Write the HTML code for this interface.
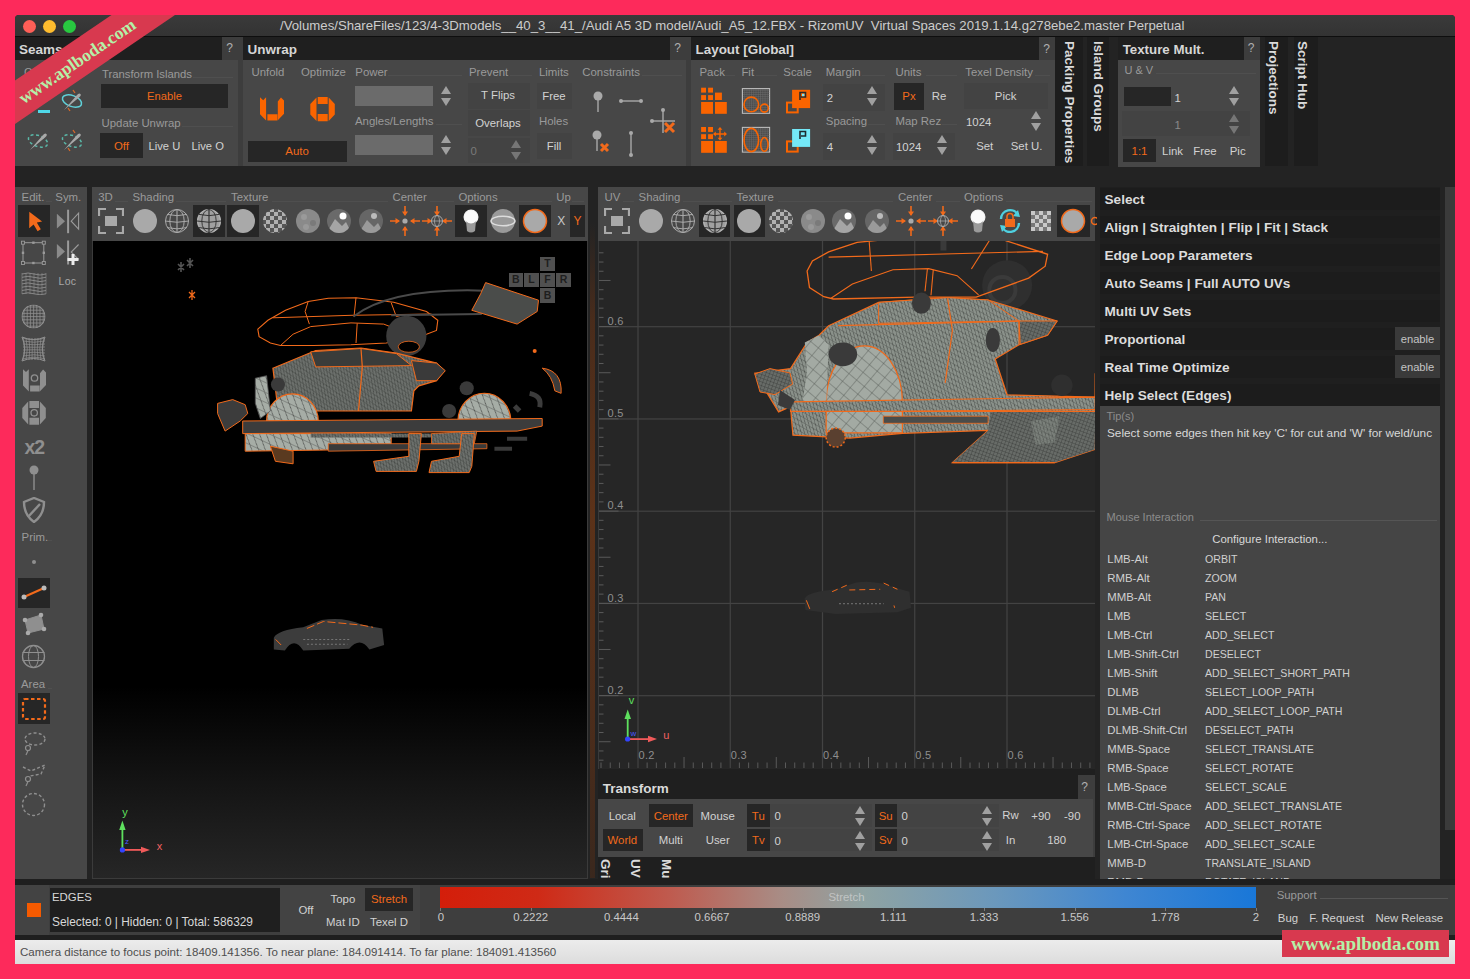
<!DOCTYPE html><html><head><meta charset="utf-8"><style>
*{margin:0;padding:0;box-sizing:border-box}
html,body{width:1470px;height:979px;overflow:hidden;background:#fd2a5b;font-family:"Liberation Sans",sans-serif}
.a{position:absolute;display:block}
#win{position:absolute;left:15px;top:15px;width:1440px;height:949px;background:#232323;overflow:hidden;border-radius:4px 4px 0 0}
#c{position:absolute;left:-15px;top:-15px;width:1470px;height:979px}
.tx{position:absolute;white-space:nowrap}
</style></head><body><div id="win"><div id="c">
<div class="a" style="left:15px;top:15px;width:1440px;height:21px;background:linear-gradient(#3a3a3a,#333);"></div>
<div class="a" style="left:15px;top:36px;width:1440px;height:1px;background:#0e0e0e;"></div>
<div class="a" style="left:22.5px;top:19.5px;width:13px;height:13px;border-radius:7px;background:#fe5f57"></div>
<div class="a" style="left:42.5px;top:19.5px;width:13px;height:13px;border-radius:7px;background:#febc2e"></div>
<div class="a" style="left:62.5px;top:19.5px;width:13px;height:13px;border-radius:7px;background:#28c840"></div>
<div class="tx" style="left:280px;top:17.42px;font-size:13.2px;line-height:17.16px;color:#cdcdcd;">/Volumes/ShareFiles/123/4-3Dmodels__40_3__41_/Audi A5 3D model/Audi_A5_12.FBX - RizomUV&nbsp; Virtual Spaces 2019.1.14.g278ebe2.master Perpetual</div>
<div class="a" style="left:15px;top:37px;width:223px;height:129px;background:#3d3d3d;"></div>
<div class="a" style="left:15px;top:37px;width:207px;height:23px;background:#1f1f1f;"></div>
<div class="tx" style="left:19px;top:41.02px;font-size:13.5px;line-height:17.55px;color:#d6d6d6;font-weight:bold;">Seams</div>
<div class="tx" style="left:79.5px;width:300px;text-align:center;top:41.2px;font-size:12px;line-height:15.6px;color:#b0b0b0;">?</div>
<div class="a" style="left:15px;top:60px;width:223px;height:106px;background:#474747;"></div>
<div class="tx" style="left:24px;top:64.59px;font-size:11.4px;line-height:14.82px;color:#9a9a9a;">C</div>
<div class="tx" style="left:102px;top:66.66px;font-size:11.3px;line-height:14.69px;color:#9a9a9a;">Transform Islands</div>
<div class="a" style="left:193px;top:77px;width:40px;height:1px;background:#4f4f4f;"></div>
<div class="a" style="left:101px;top:84px;width:127px;height:24px;background:#262626;"></div>
<div class="tx" style="left:14.5px;width:300px;text-align:center;top:88.72px;font-size:11.2px;line-height:14.56px;color:#f26a1b;">Enable</div>
<div class="tx" style="left:101.5px;top:115.59px;font-size:11.4px;line-height:14.82px;color:#9a9a9a;">Update Unwrap</div>
<div class="a" style="left:182px;top:126px;width:51px;height:1px;background:#4f4f4f;"></div>
<div class="a" style="left:100px;top:133px;width:43px;height:25px;background:#262626;"></div>
<div class="tx" style="left:-28.5px;width:300px;text-align:center;top:138.59px;font-size:11.4px;line-height:14.82px;color:#f26a1b;">Off</div>
<div class="tx" style="left:148.5px;top:138.72px;font-size:11.2px;line-height:14.56px;color:#d2d2d2;">Live U</div>
<div class="tx" style="left:191.5px;top:138.72px;font-size:11.2px;line-height:14.56px;color:#d2d2d2;">Live O</div>
<svg class="a" style="left:60.400000000000006px;top:89px;" width="24" height="24" viewBox="0 0 24 24"><ellipse cx="12" cy="12" rx="10" ry="5.5" transform="rotate(20 12 12)" fill="none" stroke="#5fd0d8" stroke-width="1.5" /><path d="M4 21 L17 6 Q19 3.5 20.5 5 Q21.5 6.5 19 8.5 Z" fill="#a8a8a8"/><path d="M13 1 L15 4 M8 19 L10 22" stroke="#d86a2a" stroke-width="1.3"/></svg>
<div class="a" style="left:38px;top:110px;width:12px;height:3px;background:#4fd8e8;"></div>
<svg class="a" style="left:25.700000000000003px;top:128.6px;" width="24" height="24" viewBox="0 0 24 24"><ellipse cx="12" cy="12" rx="10" ry="5.5" transform="rotate(20 12 12)" fill="none" stroke="#5ab8a8" stroke-width="1.5" stroke-dasharray="3 2.5"/><path d="M4 21 L17 6 Q19 3.5 20.5 5 Q21.5 6.5 19 8.5 Z" fill="#a8a8a8"/></svg>
<svg class="a" style="left:60.400000000000006px;top:128.6px;" width="24" height="24" viewBox="0 0 24 24"><ellipse cx="12" cy="12" rx="10" ry="5.5" transform="rotate(20 12 12)" fill="none" stroke="#5ab8a8" stroke-width="1.5" stroke-dasharray="3 2.5"/><path d="M4 21 L17 6 Q19 3.5 20.5 5 Q21.5 6.5 19 8.5 Z" fill="#a8a8a8"/><path d="M13 1 L15 4 M8 19 L10 22" stroke="#d86a2a" stroke-width="1.3"/></svg>
<div class="a" style="left:238px;top:37px;width:448px;height:129px;background:#3d3d3d;"></div>
<div class="a" style="left:243px;top:37px;width:427px;height:23px;background:#1f1f1f;"></div>
<div class="tx" style="left:247.5px;top:41.02px;font-size:13.5px;line-height:17.55px;color:#d6d6d6;font-weight:bold;">Unwrap</div>
<div class="tx" style="left:527.5px;width:300px;text-align:center;top:41.2px;font-size:12px;line-height:15.6px;color:#b0b0b0;">?</div>
<div class="a" style="left:243px;top:60px;width:443px;height:106px;background:#474747;"></div>
<div class="tx" style="left:251.5px;top:64.59px;font-size:11.4px;line-height:14.82px;color:#9a9a9a;">Unfold</div>
<div class="tx" style="left:301px;top:64.59px;font-size:11.4px;line-height:14.82px;color:#9a9a9a;">Optimize</div>
<div class="tx" style="left:355.3px;top:64.59px;font-size:11.4px;line-height:14.82px;color:#9a9a9a;">Power</div>
<div class="a" style="left:388px;top:75px;width:74px;height:1px;background:#4f4f4f;"></div>
<div class="tx" style="left:469px;top:64.59px;font-size:11.4px;line-height:14.82px;color:#9a9a9a;">Prevent</div>
<div class="a" style="left:510px;top:75px;width:22px;height:1px;background:#4f4f4f;"></div>
<div class="tx" style="left:539px;top:64.59px;font-size:11.4px;line-height:14.82px;color:#9a9a9a;">Limits</div>
<div class="tx" style="left:582.3px;top:64.59px;font-size:11.4px;line-height:14.82px;color:#9a9a9a;">Constraints</div>
<div class="a" style="left:642px;top:75px;width:40px;height:1px;background:#4f4f4f;"></div>
<svg class="a" style="left:259.7px;top:97.3px;" width="25" height="25" viewBox="0 0 25 25"><path d="M0 0.3 L3.2 3.2 L6.1 0.3 L6.1 23.6 L0 17.2 Z M7.4 17.2 H17.4 V23.4 H7.4 Z M17.8 4.5 L21 0.6 L24 3.6 L24 16.8 L17.8 23.3 Z" fill="#fa6400"/></svg>
<svg class="a" style="left:309.5px;top:96.6px;" width="25" height="25" viewBox="0 0 25 25"><path d="M6.5 0.6 V23.9 L0.3 17.5 V7.1 Z M7.7 0 H17.7 V7.1 H7.7 Z M7.7 17.1 H17.7 V24.2 H7.7 Z M18.7 0.6 L24.8 7.1 V17.5 L18.7 23.9 Z" fill="#fa6400"/></svg>
<div class="a" style="left:247.5px;top:140.5px;width:99.5px;height:21.5px;background:#262626;"></div>
<div class="tx" style="left:147px;width:300px;text-align:center;top:144.09px;font-size:11.4px;line-height:14.82px;color:#f26a1b;">Auto</div>
<div class="a" style="left:355px;top:86px;width:78px;height:20px;background:#6b6b6b;"></div>
<svg class="a" style="left:440px;top:85px;" width="12" height="22" viewBox="0 0 12 22"><path d="M6 1 L11 9 L1 9 Z M1 13 L11 13 L6 21 Z" fill="#a0a0a0" opacity="1"/></svg>
<div class="tx" style="left:355px;top:113.59px;font-size:11.4px;line-height:14.82px;color:#9a9a9a;">Angles/Lengths</div>
<div class="a" style="left:436px;top:124px;width:26px;height:1px;background:#4f4f4f;"></div>
<div class="a" style="left:355px;top:135px;width:78px;height:20px;background:#6b6b6b;"></div>
<svg class="a" style="left:440px;top:134px;" width="12" height="22" viewBox="0 0 12 22"><path d="M6 1 L11 9 L1 9 Z M1 13 L11 13 L6 21 Z" fill="#a0a0a0" opacity="1"/></svg>
<div class="a" style="left:468px;top:83px;width:62px;height:26px;background:#434343;"></div>
<div class="tx" style="left:348px;width:300px;text-align:center;top:88.09px;font-size:11.4px;line-height:14.82px;color:#d2d2d2;">T Flips</div>
<div class="a" style="left:468px;top:110px;width:62px;height:26px;background:#434343;"></div>
<div class="tx" style="left:348px;width:300px;text-align:center;top:115.59px;font-size:11.4px;line-height:14.82px;color:#d2d2d2;">Overlaps</div>
<div class="a" style="left:468px;top:138px;width:62px;height:25px;background:#434343;"></div>
<div class="tx" style="left:470.5px;top:143.59px;font-size:11.4px;line-height:14.82px;color:#7a7a7a;">0</div>
<svg class="a" style="left:510px;top:139px;" width="12" height="22" viewBox="0 0 12 22"><path d="M6 1 L11 9 L1 9 Z M1 13 L11 13 L6 21 Z" fill="#9a9a9a" opacity="0.6"/></svg>
<div class="a" style="left:537px;top:83px;width:35px;height:26px;background:#434343;"></div>
<div class="tx" style="left:404px;width:300px;text-align:center;top:88.59px;font-size:11.4px;line-height:14.82px;color:#d2d2d2;">Free</div>
<div class="tx" style="left:539px;top:113.59px;font-size:11.4px;line-height:14.82px;color:#9a9a9a;">Holes</div>
<div class="a" style="left:537px;top:133px;width:35px;height:26px;background:#434343;"></div>
<div class="tx" style="left:404px;width:300px;text-align:center;top:138.59px;font-size:11.4px;line-height:14.82px;color:#d2d2d2;">Fill</div>
<svg class="a" style="left:591.6px;top:91px;" width="12" height="22" viewBox="0 0 12 22"><circle cx="6" cy="5" r="4.5" fill="#a9a9a9"/><rect x="5.3" y="8" width="1.4" height="13" fill="#a9a9a9"/></svg>
<svg class="a" style="left:591px;top:130px;" width="20" height="24" viewBox="0 0 20 24"><circle cx="6" cy="5" r="4.5" fill="#a9a9a9"/><rect x="5.3" y="8" width="1.4" height="13" fill="#a9a9a9"/><path d="M10 14 L17 21 M17 14 L10 21" stroke="#f26a1b" stroke-width="3"/></svg>
<svg class="a" style="left:619px;top:96px;" width="24" height="10" viewBox="0 0 24 10"><circle cx="2" cy="5" r="2" fill="#a9a9a9"/><circle cx="22" cy="5" r="2" fill="#a9a9a9"/><rect x="2" y="4.3" width="20" height="1.4" fill="#a9a9a9"/></svg>
<svg class="a" style="left:625.5px;top:131px;" width="10" height="26" viewBox="0 0 10 26"><circle cx="5" cy="2" r="2" fill="#a9a9a9"/><circle cx="5" cy="24" r="2" fill="#a9a9a9"/><rect x="4.3" y="2" width="1.4" height="22" fill="#a9a9a9"/></svg>
<svg class="a" style="left:650px;top:108px;" width="28" height="28" viewBox="0 0 28 28"><rect x="12.3" y="1" width="1.4" height="24" fill="#a9a9a9"/><rect x="1" y="12.3" width="24" height="1.4" fill="#a9a9a9"/><circle cx="13" cy="2" r="2" fill="#a9a9a9"/><circle cx="2" cy="13" r="2" fill="#a9a9a9"/><path d="M15 15 L24 24 M24 15 L15 24" stroke="#f26a1b" stroke-width="3"/></svg>
<div class="a" style="left:686px;top:37px;width:369px;height:129px;background:#3d3d3d;"></div>
<div class="a" style="left:691px;top:37px;width:348px;height:23px;background:#1f1f1f;"></div>
<div class="tx" style="left:695.5px;top:41.06px;font-size:13.45px;line-height:17.48px;color:#d6d6d6;font-weight:bold;">Layout [Global]</div>
<div class="tx" style="left:896.7px;width:300px;text-align:center;top:41.7px;font-size:12px;line-height:15.6px;color:#b0b0b0;">?</div>
<div class="a" style="left:691px;top:60px;width:364px;height:106px;background:#474747;"></div>
<div class="tx" style="left:699.5px;top:64.59px;font-size:11.4px;line-height:14.82px;color:#9a9a9a;">Pack</div>
<div class="a" style="left:725px;top:75px;width:10px;height:1px;background:#4f4f4f;"></div>
<div class="tx" style="left:741.4px;top:64.59px;font-size:11.4px;line-height:14.82px;color:#9a9a9a;">Fit</div>
<div class="a" style="left:756px;top:75px;width:21px;height:1px;background:#4f4f4f;"></div>
<div class="tx" style="left:783.3px;top:64.59px;font-size:11.4px;line-height:14.82px;color:#9a9a9a;">Scale</div>
<div class="tx" style="left:825.8px;top:64.59px;font-size:11.4px;line-height:14.82px;color:#9a9a9a;">Margin</div>
<div class="a" style="left:862px;top:75px;width:23px;height:1px;background:#4f4f4f;"></div>
<div class="tx" style="left:895.5px;top:64.59px;font-size:11.4px;line-height:14.82px;color:#9a9a9a;">Units</div>
<div class="a" style="left:926px;top:75px;width:31px;height:1px;background:#4f4f4f;"></div>
<div class="tx" style="left:965.2px;top:64.59px;font-size:11.4px;line-height:14.82px;color:#9a9a9a;">Texel Density</div>
<div class="a" style="left:1035px;top:75px;width:15px;height:1px;background:#4f4f4f;"></div>
<svg class="a" style="left:695px;top:82px" width="120" height="76" viewBox="695 82 120 76"><rect x="701.1" y="87.7" width="4.9" height="4.9" fill="#fa6400"/><rect x="708.1" y="87.7" width="4.9" height="4.9" fill="#fa6400"/><rect x="701.1" y="95.1" width="4.9" height="4.9" fill="#fa6400"/><rect x="708.1" y="95.1" width="4.9" height="4.9" fill="#fa6400"/><rect x="715" y="92.6" width="6.9" height="7.4" fill="#fa6400"/><rect x="701.1" y="102" width="11.9" height="11.8" fill="#fa6400"/><rect x="715" y="102" width="11.8" height="11.8" fill="#fa6400"/><rect x="701.1" y="127" width="4.9" height="4.9" fill="#fa6400"/><rect x="708.1" y="127" width="4.9" height="4.9" fill="#fa6400"/><rect x="701.1" y="134.2" width="4.9" height="4.9" fill="#fa6400"/><rect x="708.1" y="134.2" width="4.9" height="4.9" fill="#fa6400"/><rect x="701.1" y="141" width="11.9" height="11.8" fill="#fa6400"/><rect x="715" y="141" width="11.8" height="11.8" fill="#fa6400"/><path d="M720 128.5 V139 M714.5 134 H725.5" stroke="#fa6400" stroke-width="1.4"/><path d="M720 127 L717.6 129.8 H722.4Z M720 140.5 L717.6 137.7 H722.4Z M713 134 L715.8 131.6 V136.4Z M727 134 L724.2 131.6 V136.4Z" fill="#fa6400"/><rect x="742.4" y="88.6" width="27.2" height="24.7" fill="#4a4a4a" stroke="#bdbdbd" stroke-width="1.1"/><path d="M744.67 89.1 V112.8 M743 90.24 H769.5" stroke="#6e6e6e" stroke-width="0.5"/><path d="M746.93 89.1 V112.8 M743 92.38 H769.5" stroke="#6e6e6e" stroke-width="0.5"/><path d="M749.20 89.1 V112.8 M743 94.52 H769.5" stroke="#6e6e6e" stroke-width="0.5"/><path d="M751.47 89.1 V112.8 M743 96.67 H769.5" stroke="#6e6e6e" stroke-width="0.5"/><path d="M753.73 89.1 V112.8 M743 98.81 H769.5" stroke="#6e6e6e" stroke-width="0.5"/><path d="M756.00 89.1 V112.8 M743 100.95 H769.5" stroke="#6e6e6e" stroke-width="0.5"/><path d="M758.27 89.1 V112.8 M743 103.09 H769.5" stroke="#6e6e6e" stroke-width="0.5"/><path d="M760.53 89.1 V112.8 M743 105.23 H769.5" stroke="#6e6e6e" stroke-width="0.5"/><path d="M762.80 89.1 V112.8 M743 107.38 H769.5" stroke="#6e6e6e" stroke-width="0.5"/><path d="M765.07 89.1 V112.8 M743 109.52 H769.5" stroke="#6e6e6e" stroke-width="0.5"/><path d="M767.33 89.1 V112.8 M743 111.66 H769.5" stroke="#6e6e6e" stroke-width="0.5"/><rect x="742.4" y="127.4" width="27.2" height="24.7" fill="#4a4a4a" stroke="#bdbdbd" stroke-width="1.1"/><path d="M744.67 127.9 V151.6 M743 129.04 H769.5" stroke="#6e6e6e" stroke-width="0.5"/><path d="M746.93 127.9 V151.6 M743 131.18 H769.5" stroke="#6e6e6e" stroke-width="0.5"/><path d="M749.20 127.9 V151.6 M743 133.32 H769.5" stroke="#6e6e6e" stroke-width="0.5"/><path d="M751.47 127.9 V151.6 M743 135.47 H769.5" stroke="#6e6e6e" stroke-width="0.5"/><path d="M753.73 127.9 V151.6 M743 137.61 H769.5" stroke="#6e6e6e" stroke-width="0.5"/><path d="M756.00 127.9 V151.6 M743 139.75 H769.5" stroke="#6e6e6e" stroke-width="0.5"/><path d="M758.27 127.9 V151.6 M743 141.89 H769.5" stroke="#6e6e6e" stroke-width="0.5"/><path d="M760.53 127.9 V151.6 M743 144.03 H769.5" stroke="#6e6e6e" stroke-width="0.5"/><path d="M762.80 127.9 V151.6 M743 146.18 H769.5" stroke="#6e6e6e" stroke-width="0.5"/><path d="M765.07 127.9 V151.6 M743 148.32 H769.5" stroke="#6e6e6e" stroke-width="0.5"/><path d="M767.33 127.9 V151.6 M743 150.46 H769.5" stroke="#6e6e6e" stroke-width="0.5"/><circle cx="751.3" cy="104.4" r="7.3" fill="none" stroke="#fa6400" stroke-width="1.6"/><circle cx="764.4" cy="108.1" r="4" fill="none" stroke="#fa6400" stroke-width="1.6"/><ellipse cx="751.3" cy="140" rx="7.3" ry="11.6" fill="none" stroke="#fa6400" stroke-width="1.6"/><ellipse cx="764.4" cy="144.4" rx="3.7" ry="6.9" fill="none" stroke="#fa6400" stroke-width="1.6"/><rect x="787" y="102.6" width="10.7" height="9.8" fill="none" stroke="#fa6400" stroke-width="2"/><rect x="792.1" y="89.8" width="18.0" height="18.3" fill="#fa6400"/><path d="M800 100 V92.5 H805.5 V97 H801" fill="none" stroke="#2a2a2a" stroke-width="1.6"/><rect x="802" y="93.8" width="2.4" height="2.4" fill="#7fe6f5"/><rect x="787" y="141.4" width="10.7" height="10.2" fill="none" stroke="#fa6400" stroke-width="2"/><rect x="792.1" y="129" width="18.0" height="17.9" fill="#74e8f7"/><path d="M800 139 V131.5 H805.5 V136 H801" fill="none" stroke="#1e2a2e" stroke-width="1.6"/></svg>
<div class="a" style="left:823px;top:84px;width:62px;height:27px;background:#434343;"></div>
<div class="tx" style="left:826.7px;top:91.09px;font-size:11.4px;line-height:14.82px;color:#d2d2d2;">2</div>
<svg class="a" style="left:865.6px;top:85px;" width="12" height="22" viewBox="0 0 12 22"><path d="M6 1 L11 9 L1 9 Z M1 13 L11 13 L6 21 Z" fill="#a0a0a0" opacity="1"/></svg>
<div class="tx" style="left:825.8px;top:113.89px;font-size:11.4px;line-height:14.82px;color:#9a9a9a;">Spacing</div>
<div class="a" style="left:868px;top:124px;width:17px;height:1px;background:#4f4f4f;"></div>
<div class="a" style="left:823px;top:133px;width:62px;height:27px;background:#434343;"></div>
<div class="tx" style="left:826.7px;top:139.59px;font-size:11.4px;line-height:14.82px;color:#d2d2d2;">4</div>
<svg class="a" style="left:865.6px;top:134px;" width="12" height="22" viewBox="0 0 12 22"><path d="M6 1 L11 9 L1 9 Z M1 13 L11 13 L6 21 Z" fill="#a0a0a0" opacity="1"/></svg>
<div class="a" style="left:894px;top:82.5px;width:30px;height:27.5px;background:#262626;"></div>
<div class="tx" style="left:759px;width:300px;text-align:center;top:88.59px;font-size:11.4px;line-height:14.82px;color:#f26a1b;">Px</div>
<div class="tx" style="left:789px;width:300px;text-align:center;top:88.59px;font-size:11.4px;line-height:14.82px;color:#d2d2d2;">Re</div>
<div class="tx" style="left:895.5px;top:113.89px;font-size:11.4px;line-height:14.82px;color:#9a9a9a;">Map Rez</div>
<div class="a" style="left:942px;top:124px;width:15px;height:1px;background:#4f4f4f;"></div>
<div class="a" style="left:893px;top:133px;width:62px;height:27px;background:#434343;"></div>
<div class="tx" style="left:896px;top:139.59px;font-size:11.4px;line-height:14.82px;color:#d2d2d2;">1024</div>
<svg class="a" style="left:936px;top:134px;" width="12" height="22" viewBox="0 0 12 22"><path d="M6 1 L11 9 L1 9 Z M1 13 L11 13 L6 21 Z" fill="#a0a0a0" opacity="1"/></svg>
<div class="a" style="left:964px;top:83px;width:84px;height:26px;background:#434343;"></div>
<div class="tx" style="left:855.6px;width:300px;text-align:center;top:88.59px;font-size:11.4px;line-height:14.82px;color:#d2d2d2;">Pick</div>
<div class="tx" style="left:966px;top:115.09px;font-size:11.4px;line-height:14.82px;color:#d2d2d2;">1024</div>
<svg class="a" style="left:1029.6px;top:110px;" width="12" height="22" viewBox="0 0 12 22"><path d="M6 1 L11 9 L1 9 Z M1 13 L11 13 L6 21 Z" fill="#a0a0a0" opacity="1"/></svg>
<div class="tx" style="left:834.7px;width:300px;text-align:center;top:138.59px;font-size:11.4px;line-height:14.82px;color:#d2d2d2;">Set</div>
<div class="tx" style="left:876.5999999999999px;width:300px;text-align:center;top:138.59px;font-size:11.4px;line-height:14.82px;color:#d2d2d2;">Set U.</div>
<div class="a" style="left:1055px;top:37px;width:28px;height:129px;background:#1d1d1d;"></div>
<div class="a" style="left:1087px;top:37px;width:22px;height:129px;background:#1d1d1d;"></div>
<div class="tx" style="left:1069px;top:41px;transform-origin:0 0;transform:rotate(90deg) translate(0,-8px);font-size:13.5px;line-height:16px;color:#dadada;font-weight:bold">Packing Properties</div>
<div class="tx" style="left:1098px;top:41px;transform-origin:0 0;transform:rotate(90deg) translate(0,-8px);font-size:13.5px;line-height:16px;color:#dadada;font-weight:bold">Island Groups</div>
<div class="a" style="left:1118px;top:37px;width:142px;height:130px;background:#3d3d3d;"></div>
<div class="a" style="left:1118px;top:37px;width:125.5px;height:23px;background:#1f1f1f;"></div>
<div class="tx" style="left:1122.7px;top:41.16px;font-size:13.3px;line-height:17.29px;color:#d6d6d6;font-weight:bold;">Texture Mult.</div>
<div class="tx" style="left:1101px;width:300px;text-align:center;top:41.2px;font-size:12px;line-height:15.6px;color:#b0b0b0;">?</div>
<div class="a" style="left:1118px;top:60px;width:142px;height:107px;background:#474747;"></div>
<div class="tx" style="left:1124.4px;top:63.35px;font-size:11px;line-height:14.3px;color:#9a9a9a;">U &amp; V</div>
<div class="a" style="left:1156px;top:73px;width:100px;height:1px;background:#4f4f4f;"></div>
<div class="a" style="left:1124px;top:87px;width:47px;height:18.7px;background:#262626;"></div>
<div class="tx" style="left:1174.5px;top:90.59px;font-size:11.4px;line-height:14.82px;color:#d2d2d2;">1</div>
<svg class="a" style="left:1228px;top:85px;" width="12" height="22" viewBox="0 0 12 22"><path d="M6 1 L11 9 L1 9 Z M1 13 L11 13 L6 21 Z" fill="#a0a0a0" opacity="1"/></svg>
<div class="a" style="left:1122px;top:111px;width:128px;height:25px;background:#434343;"></div>
<div class="tx" style="left:1174.5px;top:117.59px;font-size:11.4px;line-height:14.82px;color:#8a8a8a;">1</div>
<svg class="a" style="left:1228px;top:113px;" width="12" height="22" viewBox="0 0 12 22"><path d="M6 1 L11 9 L1 9 Z M1 13 L11 13 L6 21 Z" fill="#9a9a9a" opacity="0.6"/></svg>
<div class="a" style="left:1123px;top:139px;width:33px;height:23px;background:#262626;"></div>
<div class="tx" style="left:989.5px;width:300px;text-align:center;top:143.59px;font-size:11.4px;line-height:14.82px;color:#f26a1b;">1:1</div>
<div class="tx" style="left:1022.5px;width:300px;text-align:center;top:143.59px;font-size:11.4px;line-height:14.82px;color:#d2d2d2;">Link</div>
<div class="tx" style="left:1055px;width:300px;text-align:center;top:143.59px;font-size:11.4px;line-height:14.82px;color:#d2d2d2;">Free</div>
<div class="tx" style="left:1087.7px;width:300px;text-align:center;top:143.59px;font-size:11.4px;line-height:14.82px;color:#d2d2d2;">Pic</div>
<div class="a" style="left:1265px;top:37px;width:23px;height:129px;background:#1d1d1d;"></div>
<div class="a" style="left:1294px;top:37px;width:24px;height:129px;background:#1d1d1d;"></div>
<div class="tx" style="left:1272.5px;top:41px;transform-origin:0 0;transform:rotate(90deg) translate(0,-8px);font-size:13.5px;line-height:16px;color:#dadada;font-weight:bold">Projections</div>
<div class="tx" style="left:1301.5px;top:41px;transform-origin:0 0;transform:rotate(90deg) translate(0,-8px);font-size:13.5px;line-height:16px;color:#dadada;font-weight:bold">Script Hub</div>
<div class="a" style="left:15px;top:187px;width:72px;height:692px;background:#474747;"></div>
<div class="tx" style="left:21.6px;top:190.09px;font-size:11.4px;line-height:14.82px;color:#9a9a9a;">Edit.</div>
<div class="a" style="left:46px;top:201px;width:6px;height:1px;background:#4f4f4f;"></div>
<div class="tx" style="left:55.3px;top:190.09px;font-size:11.4px;line-height:14.82px;color:#9a9a9a;">Sym.</div>
<div class="a" style="left:18px;top:205px;width:32px;height:32px;background:#262626;"></div>
<svg class="a" style="left:15px;top:205px" width="75" height="65" viewBox="15 205 75 65"><path d="M29.3 211.7 L42.1 221.5 L36.8 222.6 L40.8 229.3 L37.6 231.2 L33.6 224.6 L29.2 228.2 Z" fill="#f26a1b"/><path d="M56.9 213.8 L65 221.2 L56.9 228.6 Z" fill="#8a8a8a"/><rect x="67.1" y="209.7" width="2" height="23.5" fill="#9a9a9a"/><path d="M78.6 213.2 L71.2 221.2 L78.6 229.2 Z" fill="none" stroke="#9a9a9a" stroke-width="1.1"/><rect x="23" y="242.7" width="20.8" height="20.3" fill="none" stroke="#9a9a9a" stroke-width="1"/><rect x="21.5" y="241.2" width="3" height="3" fill="#474747" stroke="#9a9a9a" stroke-width="0.9"/><rect x="42.3" y="241.2" width="3" height="3" fill="#474747" stroke="#9a9a9a" stroke-width="0.9"/><rect x="21.5" y="261.5" width="3" height="3" fill="#474747" stroke="#9a9a9a" stroke-width="0.9"/><rect x="42.3" y="261.5" width="3" height="3" fill="#474747" stroke="#9a9a9a" stroke-width="0.9"/><rect x="32.199999999999996" y="241.5" width="2.4" height="2.4" fill="#9a9a9a"/><rect x="32.199999999999996" y="261.8" width="2.4" height="2.4" fill="#9a9a9a"/><rect x="21.8" y="251.60000000000002" width="2.4" height="2.4" fill="#9a9a9a"/><rect x="42.599999999999994" y="251.60000000000002" width="2.4" height="2.4" fill="#9a9a9a"/><path d="M56.9 244 L65 251.4 L56.9 258.8 Z" fill="#8a8a8a"/><rect x="67.1" y="240.5" width="2" height="24" fill="#9a9a9a"/><path d="M78.6 244.5 L71.2 252 L78.6 259.5" fill="none" stroke="#9a9a9a" stroke-width="1.1"/><path d="M73 254 V265 M67.5 259.5 H78.5" stroke="#ececec" stroke-width="3"/></svg>
<svg class="a" style="left:21px;top:271px;" width="26" height="24" viewBox="0 0 26 24"><path d="M1 3.0 Q7 1.0 13 3.0 T25 3.0" fill="none" stroke="#8f8f8f" stroke-width="0.9"/><path d="M1 6.3 Q7 4.3 13 6.3 T25 6.3" fill="none" stroke="#8f8f8f" stroke-width="0.9"/><path d="M1 9.6 Q7 7.6 13 9.6 T25 9.6" fill="none" stroke="#8f8f8f" stroke-width="0.9"/><path d="M1 12.899999999999999 Q7 10.899999999999999 13 12.899999999999999 T25 12.899999999999999" fill="none" stroke="#8f8f8f" stroke-width="0.9"/><path d="M1 16.2 Q7 14.2 13 16.2 T25 16.2" fill="none" stroke="#8f8f8f" stroke-width="0.9"/><path d="M1 19.5 Q7 17.5 13 19.5 T25 19.5" fill="none" stroke="#8f8f8f" stroke-width="0.9"/><path d="M1 22.799999999999997 Q7 20.799999999999997 13 22.799999999999997 T25 22.799999999999997" fill="none" stroke="#8f8f8f" stroke-width="0.9"/><path d="M1 2 V23" stroke="#8f8f8f" stroke-width="0.6"/><path d="M5 2 V23" stroke="#8f8f8f" stroke-width="0.6"/><path d="M9 2 V23" stroke="#8f8f8f" stroke-width="0.6"/><path d="M13 2 V23" stroke="#8f8f8f" stroke-width="0.6"/><path d="M17 2 V23" stroke="#8f8f8f" stroke-width="0.6"/><path d="M21 2 V23" stroke="#8f8f8f" stroke-width="0.6"/><path d="M25 2 V23" stroke="#8f8f8f" stroke-width="0.6"/></svg>
<div class="tx" style="left:-82.5px;width:300px;text-align:center;top:274.68px;font-size:10.5px;line-height:13.65px;color:#a8a8a8;letter-spacing:0.3px">Loc</div>
<svg class="a" style="left:21px;top:304px;clip-path:circle(12px at 12.5px 12.5px)" width="25" height="25" viewBox="0 0 25 25"><circle cx="12.5" cy="12.5" r="11.5" fill="none" stroke="#8f8f8f" stroke-width="1.2"/><path d="M1 3.0 H24 M3.0 1 V24" stroke="#8f8f8f" stroke-width="0.8"/><path d="M1 6.2 H24 M6.2 1 V24" stroke="#8f8f8f" stroke-width="0.8"/><path d="M1 9.4 H24 M9.4 1 V24" stroke="#8f8f8f" stroke-width="0.8"/><path d="M1 12.600000000000001 H24 M12.600000000000001 1 V24" stroke="#8f8f8f" stroke-width="0.8"/><path d="M1 15.8 H24 M15.8 1 V24" stroke="#8f8f8f" stroke-width="0.8"/><path d="M1 19.0 H24 M19.0 1 V24" stroke="#8f8f8f" stroke-width="0.8"/><path d="M1 22.200000000000003 H24 M22.200000000000003 1 V24" stroke="#8f8f8f" stroke-width="0.8"/></svg>
<svg class="a" style="left:21px;top:336px;" width="25" height="26" viewBox="0 0 25 26"><path d="M1 1 Q12.5 6 24 1 Q19 13 24 25 Q12.5 20 1 25 Q6 13 1 1 Z" fill="none" stroke="#8f8f8f" stroke-width="1"/><path d="M2 2 Q5.5 13 2 24 M2 2 Q13 5.5 24 2" fill="none" stroke="#8f8f8f" stroke-width="0.7"/><path d="M5 2 Q7.5 13 5 24 M2 5 Q13 7.5 24 5" fill="none" stroke="#8f8f8f" stroke-width="0.7"/><path d="M8 2 Q9.5 13 8 24 M2 8 Q13 9.5 24 8" fill="none" stroke="#8f8f8f" stroke-width="0.7"/><path d="M11 2 Q11.5 13 11 24 M2 11 Q13 11.5 24 11" fill="none" stroke="#8f8f8f" stroke-width="0.7"/><path d="M14 2 Q13.5 13 14 24 M2 14 Q13 13.5 24 14" fill="none" stroke="#8f8f8f" stroke-width="0.7"/><path d="M17 2 Q15.5 13 17 24 M2 17 Q13 15.5 24 17" fill="none" stroke="#8f8f8f" stroke-width="0.7"/><path d="M20 2 Q17.5 13 20 24 M2 20 Q13 17.5 24 20" fill="none" stroke="#8f8f8f" stroke-width="0.7"/><path d="M23 2 Q19.5 13 23 24 M2 23 Q13 19.5 24 23" fill="none" stroke="#8f8f8f" stroke-width="0.7"/></svg>
<svg class="a" style="left:22.5px;top:369px;" width="23" height="23" viewBox="0 0 23 23"><path d="M0 0.3 L3 3 L5.8 0.3 L5.8 22.6 L0 16.5 Z M7.1 16.5 H16.7 V22.4 H7.1 Z M17 4.3 L20.1 0.6 L23 3.4 L23 16.1 L17 22.3 Z" fill="#8f8f8f"/><circle cx="11.5" cy="9" r="3.2" fill="none" stroke="#8f8f8f" stroke-width="1.3"/></svg>
<svg class="a" style="left:22px;top:401px;" width="24" height="24" viewBox="0 0 24 24"><path d="M6.2 0.6 V23.4 L0.3 17.1 V6.9 Z M7.4 0 H17 V6.9 H7.4 Z M7.4 16.7 H17 V23.7 H7.4 Z M17.9 0.6 L23.8 6.9 V17.1 L17.9 23.4 Z" fill="#8f8f8f"/><circle cx="12.2" cy="11.8" r="3.2" fill="none" stroke="#8f8f8f" stroke-width="1.3"/></svg>
<div class="tx" style="left:-115.7px;width:300px;text-align:center;top:434.72px;font-size:19.5px;line-height:25.35px;color:#8f8f8f;font-weight:bold;letter-spacing:-1px">x2</div>
<svg class="a" style="left:28px;top:465px;" width="12" height="26" viewBox="0 0 12 26"><circle cx="6" cy="5" r="4.5" fill="#8f8f8f"/><rect x="5.3" y="8" width="1.4" height="17" fill="#8f8f8f"/></svg>
<svg class="a" style="left:22px;top:497px;" width="24" height="26" viewBox="0 0 24 26"><path d="M12 1 L22 5 Q22 18 12 25 Q2 18 2 5 Z" fill="none" stroke="#8f8f8f" stroke-width="2.4"/><path d="M6 20 L18 7" stroke="#8f8f8f" stroke-width="2.4"/></svg>
<div class="tx" style="left:21.6px;top:529.59px;font-size:11.4px;line-height:14.82px;color:#9a9a9a;">Prim.</div>
<div class="a" style="left:48px;top:540px;width:4px;height:1px;background:#4f4f4f;"></div>
<div class="a" style="left:32px;top:559.5px;width:4px;height:4px;border-radius:2px;background:#8f8f8f"></div>
<div class="a" style="left:18px;top:577.5px;width:31.5px;height:30.5px;background:#262626;"></div>
<svg class="a" style="left:21px;top:584px;" width="26" height="18" viewBox="0 0 26 18"><path d="M3 13 L23 4" stroke="#f26a1b" stroke-width="2.2"/><circle cx="3" cy="13" r="2.5" fill="#bbb"/><circle cx="23" cy="4" r="2.5" fill="#bbb"/></svg>
<svg class="a" style="left:21px;top:612px;" width="26" height="24" viewBox="0 0 26 24"><path d="M4 8 L20 3 L23 17 L7 21 Z" fill="#8f8f8f" stroke="#8f8f8f"/><circle cx="4" cy="8" r="2.3" fill="#aaa"/><circle cx="20" cy="3" r="2.3" fill="#aaa"/><circle cx="23" cy="17" r="2.3" fill="#aaa"/><circle cx="7" cy="21" r="2.3" fill="#aaa"/></svg>
<svg class="a" style="left:21px;top:644px;" width="25" height="25" viewBox="0 0 25 25"><circle cx="12.5" cy="12.5" r="11" fill="none" stroke="#8f8f8f" stroke-width="1.3"/><ellipse cx="12.5" cy="12.5" rx="5" ry="11" fill="none" stroke="#8f8f8f" stroke-width="1"/><path d="M1.5 8.5 H23.5 M1.5 16.5 H23.5" stroke="#8f8f8f" stroke-width="1"/></svg>
<div class="tx" style="left:21px;top:677.39px;font-size:11.4px;line-height:14.82px;color:#9a9a9a;">Area</div>
<div class="a" style="left:48px;top:688px;width:4px;height:1px;background:#4f4f4f;"></div>
<div class="a" style="left:18px;top:693px;width:31.5px;height:31px;background:#262626;"></div>
<svg class="a" style="left:21px;top:696px;" width="26" height="26" viewBox="0 0 26 26"><rect x="2" y="3" width="22" height="20" rx="2" fill="none" stroke="#f26a1b" stroke-width="2.2" stroke-dasharray="3.5 2.5"/></svg>
<svg class="a" style="left:21px;top:730px;" width="26" height="26" viewBox="0 0 26 26"><ellipse cx="14" cy="9" rx="10" ry="6" fill="none" stroke="#8f8f8f" stroke-width="1.4" stroke-dasharray="3 2.2"/><circle cx="7" cy="18" r="2.5" fill="none" stroke="#8f8f8f" stroke-width="1.2"/><path d="M7 20.5 L5 25" stroke="#8f8f8f" stroke-width="1.2"/></svg>
<svg class="a" style="left:21px;top:761px;" width="26" height="26" viewBox="0 0 26 26"><path d="M2 6 L10 10 L24 4 L20 13 L9 15" fill="none" stroke="#8f8f8f" stroke-width="1.4" stroke-dasharray="3 2.2"/><circle cx="7" cy="18" r="2.5" fill="none" stroke="#8f8f8f" stroke-width="1.2"/><path d="M7 20.5 L5 25" stroke="#8f8f8f" stroke-width="1.2"/></svg>
<svg class="a" style="left:21px;top:792px;" width="25" height="25" viewBox="0 0 25 25"><circle cx="12.5" cy="12.5" r="11" fill="none" stroke="#8f8f8f" stroke-width="1.4" stroke-dasharray="3 2.2"/></svg>
<div class="a" style="left:92px;top:187px;width:496px;height:692px;background:#3b3b3b;"></div>
<div class="a" style="left:92px;top:187px;width:496px;height:54px;background:#474747;"></div>
<div class="tx" style="left:98.2px;top:190.09px;font-size:11.4px;line-height:14.82px;color:#9a9a9a;">3D</div>
<div class="a" style="left:115px;top:201px;width:13px;height:1px;background:#4f4f4f;"></div>
<div class="tx" style="left:132.4px;top:190.09px;font-size:11.4px;line-height:14.82px;color:#9a9a9a;">Shading</div>
<div class="a" style="left:176px;top:201px;width:50px;height:1px;background:#4f4f4f;"></div>
<div class="tx" style="left:231px;top:190.09px;font-size:11.4px;line-height:14.82px;color:#9a9a9a;">Texture</div>
<div class="a" style="left:272px;top:201px;width:116px;height:1px;background:#4f4f4f;"></div>
<div class="tx" style="left:392.5px;top:190.09px;font-size:11.4px;line-height:14.82px;color:#9a9a9a;">Center</div>
<div class="a" style="left:430px;top:201px;width:24px;height:1px;background:#4f4f4f;"></div>
<div class="tx" style="left:458.4px;top:190.09px;font-size:11.4px;line-height:14.82px;color:#9a9a9a;">Options</div>
<div class="a" style="left:500px;top:201px;width:52px;height:1px;background:#4f4f4f;"></div>
<div class="tx" style="left:556.3px;top:190.09px;font-size:11.4px;line-height:14.82px;color:#9a9a9a;">Up</div>
<div class="a" style="left:572px;top:201px;width:12px;height:1px;background:#4f4f4f;"></div>
<div class="a" style="left:193.3px;top:205px;width:31.4px;height:31.7px;background:#262626;"></div>
<div class="a" style="left:227.3px;top:205px;width:31.7px;height:31.7px;background:#262626;"></div>
<div class="a" style="left:455px;top:205px;width:31.7px;height:31.7px;background:#262626;"></div>
<div class="a" style="left:519.3px;top:205px;width:31.7px;height:31.7px;background:#262626;"></div>
<div class="a" style="left:570.2px;top:205.3px;width:14.4px;height:31.3px;background:#262626;"></div>
<svg class="a" style="left:98px;top:207.8px;" width="26" height="26" viewBox="0 0 26 26"><path d="M1 8 V1 H8 M18 1 H25 V8 M25 18 V25 H18 M8 25 H1 V18" fill="none" stroke="#a9a9a9" stroke-width="2.2"/><rect x="7" y="8" width="12" height="10" fill="#a9a9a9"/></svg>
<svg class="a" style="left:132px;top:207.8px;" width="26" height="26" viewBox="0 0 26 26"><circle cx="13" cy="13" r="12" fill="#a9a9a9"/></svg>
<svg class="a" style="left:163.7px;top:207.8px;" width="26" height="26" viewBox="0 0 26 26"><circle cx="13" cy="13" r="11.5" fill="none" stroke="#a9a9a9" stroke-width="1"/><ellipse cx="13" cy="13" rx="7.199999999999999" ry="11.5" fill="none" stroke="#a9a9a9" stroke-width="1"/><path d="M13 1 V25" stroke="#a9a9a9" stroke-width="1.1"/><path d="M2.9780241469059607 6.3999999999999995 Q13 8.899999999999999 23.02197585309404 6.3999999999999995" fill="none" stroke="#a9a9a9" stroke-width="1"/><path d="M1.0 13.0 Q13 15.5 25.0 13.0" fill="none" stroke="#a9a9a9" stroke-width="1"/><path d="M2.9780241469059607 19.6 Q13 22.1 23.02197585309404 19.6" fill="none" stroke="#a9a9a9" stroke-width="1"/></svg>
<svg class="a" style="left:196px;top:207.8px;" width="26" height="26" viewBox="0 0 26 26"><circle cx="13" cy="13" r="12" fill="#a0a0a0"/><circle cx="13" cy="13" r="11.5" fill="none" stroke="#b8b8b8" stroke-width="1"/><ellipse cx="13" cy="13" rx="7.199999999999999" ry="11.5" fill="none" stroke="#3a3a3a" stroke-width="1"/><path d="M13 1 V25" stroke="#333" stroke-width="1.2"/><path d="M2.9780241469059607 6.3999999999999995 Q13 8.899999999999999 23.02197585309404 6.3999999999999995" fill="none" stroke="#333" stroke-width="1"/><path d="M1.0 13.0 Q13 15.5 25.0 13.0" fill="none" stroke="#333" stroke-width="1"/><path d="M2.9780241469059607 19.6 Q13 22.1 23.02197585309404 19.6" fill="none" stroke="#333" stroke-width="1"/></svg>
<svg class="a" style="left:230px;top:207.8px;" width="26" height="26" viewBox="0 0 26 26"><circle cx="13" cy="13" r="12" fill="#a9a9a9"/></svg>
<svg class="a" style="left:261.7px;top:207.8px;" width="26" height="26" viewBox="0 0 26 26"><defs><clipPath id="ck274"><circle cx="13" cy="13" r="12"/></clipPath></defs><g clip-path="url(#ck274)"><rect x="0" y="0" width="26" height="26" fill="#555"/><rect x="0" y="0" width="4" height="4" fill="#b0b0b0"/><rect x="0" y="8" width="4" height="4" fill="#b0b0b0"/><rect x="0" y="16" width="4" height="4" fill="#b0b0b0"/><rect x="0" y="24" width="4" height="4" fill="#b0b0b0"/><rect x="4" y="4" width="4" height="4" fill="#b0b0b0"/><rect x="4" y="12" width="4" height="4" fill="#b0b0b0"/><rect x="4" y="20" width="4" height="4" fill="#b0b0b0"/><rect x="8" y="0" width="4" height="4" fill="#b0b0b0"/><rect x="8" y="8" width="4" height="4" fill="#b0b0b0"/><rect x="8" y="16" width="4" height="4" fill="#b0b0b0"/><rect x="8" y="24" width="4" height="4" fill="#b0b0b0"/><rect x="12" y="4" width="4" height="4" fill="#b0b0b0"/><rect x="12" y="12" width="4" height="4" fill="#b0b0b0"/><rect x="12" y="20" width="4" height="4" fill="#b0b0b0"/><rect x="16" y="0" width="4" height="4" fill="#b0b0b0"/><rect x="16" y="8" width="4" height="4" fill="#b0b0b0"/><rect x="16" y="16" width="4" height="4" fill="#b0b0b0"/><rect x="16" y="24" width="4" height="4" fill="#b0b0b0"/><rect x="20" y="4" width="4" height="4" fill="#b0b0b0"/><rect x="20" y="12" width="4" height="4" fill="#b0b0b0"/><rect x="20" y="20" width="4" height="4" fill="#b0b0b0"/><rect x="24" y="0" width="4" height="4" fill="#b0b0b0"/><rect x="24" y="8" width="4" height="4" fill="#b0b0b0"/><rect x="24" y="16" width="4" height="4" fill="#b0b0b0"/><rect x="24" y="24" width="4" height="4" fill="#b0b0b0"/></g></svg>
<svg class="a" style="left:294.6px;top:207.8px;" width="26" height="26" viewBox="0 0 26 26"><circle cx="13" cy="13" r="12" fill="#8a8a8a"/><circle cx="9" cy="9" r="3" fill="#9a9a9a"/><circle cx="18" cy="15" r="3" fill="#7a7a7a"/><circle cx="11" cy="19" r="3" fill="#999"/></svg>
<svg class="a" style="left:325.6px;top:207.8px;" width="26" height="26" viewBox="0 0 26 26"><defs><clipPath id="mt338"><circle cx="13" cy="13" r="12"/></clipPath></defs><circle cx="13" cy="13" r="12" fill="#6a6a6a"/><g clip-path="url(#mt338)"><path d="M0 26 L9 11 L16 18 L20 14 L26 26 Z" fill="#a5a5a5"/></g><circle cx="17" cy="8" r="3.5" fill="#fff"/></svg>
<svg class="a" style="left:358.3px;top:207.8px;" width="26" height="26" viewBox="0 0 26 26"><defs><clipPath id="mu371"><circle cx="13" cy="13" r="12"/></clipPath></defs><circle cx="13" cy="13" r="12" fill="#666"/><g clip-path="url(#mu371)"><path d="M0 26 L9 12 L16 19 L20 15 L26 26 Z" fill="#9a9a9a"/></g><circle cx="16" cy="8" r="3" fill="#bbb"/></svg>
<svg class="a" style="left:389.8px;top:205.8px;" width="30" height="30" viewBox="0 0 30 30"><path d="M15 0 V9 M15 21 V30 M0 15 H9 M21 15 H30" stroke="#f26a1b" stroke-width="1.6"/><path d="M15 10 L12 5.5 L18 5.5 Z M15 20 L12 24.5 L18 24.5 Z M10 15 L5.5 12 L5.5 18 Z M20 15 L24.5 12 L24.5 18 Z" fill="#f26a1b"/><circle cx="15" cy="15" r="2.6" fill="#aaa"/></svg>
<svg class="a" style="left:421.9px;top:205.8px;" width="30" height="30" viewBox="0 0 30 30"><path d="M15 0 V9 M15 21 V30 M0 15 H9 M21 15 H30" stroke="#f26a1b" stroke-width="1.6"/><path d="M15 10 L12 5.5 L18 5.5 Z M15 20 L12 24.5 L18 24.5 Z M10 15 L5.5 12 L5.5 18 Z M20 15 L24.5 12 L24.5 18 Z" fill="#f26a1b"/><circle cx="15" cy="15" r="5.5" fill="none" stroke="#aaa" stroke-width="1"/><ellipse cx="15" cy="15" rx="2.5" ry="5.5" fill="none" stroke="#aaa" stroke-width="0.8"/><path d="M9.5 15 H20.5" stroke="#aaa" stroke-width="0.8"/></svg>
<svg class="a" style="left:461.9px;top:208.8px;" width="18" height="25" viewBox="0 0 18 25"><circle cx="9" cy="8" r="7.5" fill="#f2f2f2"/><path d="M4 12 L14 12 L13 22 Q9 25 5 22 Z" fill="#9a9a9a"/><circle cx="9" cy="8" r="6.5" fill="#fafafa"/></svg>
<svg class="a" style="left:489.7px;top:207.8px;" width="26" height="26" viewBox="0 0 26 26"><circle cx="13" cy="13" r="12" fill="#9a9a9a"/><ellipse cx="13" cy="13" rx="12" ry="4.800000000000001" fill="none" stroke="#dcdcdc" stroke-width="1.5"/></svg>
<svg class="a" style="left:521.6px;top:207.8px;" width="26" height="26" viewBox="0 0 26 26"><circle cx="13" cy="13" r="11.5" fill="#a9a9a9" stroke="#f26a1b" stroke-width="1.5"/></svg>
<div class="tx" style="left:411.20000000000005px;width:300px;text-align:center;top:213.5px;font-size:12px;line-height:15.6px;color:#c8c8c8;">X</div>
<div class="tx" style="left:427.4px;width:300px;text-align:center;top:213.5px;font-size:12px;line-height:15.6px;color:#f26a1b;">Y</div>
<div class="a" style="left:93px;top:241px;width:494px;height:637px;background:linear-gradient(#000 0%,#000 70%,#141414 85%,#262626 100%);"></div>
<div class="a" style="left:598px;top:187px;width:497px;height:693px;background:#1f1f1f;"></div>
<div class="a" style="left:598px;top:187px;width:497px;height:54px;background:#474747;"></div>
<div class="tx" style="left:604.6px;top:190.09px;font-size:11.4px;line-height:14.82px;color:#9a9a9a;">UV</div>
<div class="a" style="left:623px;top:201px;width:11px;height:1px;background:#4f4f4f;"></div>
<div class="tx" style="left:638.6px;top:190.09px;font-size:11.4px;line-height:14.82px;color:#9a9a9a;">Shading</div>
<div class="a" style="left:683px;top:201px;width:49px;height:1px;background:#4f4f4f;"></div>
<div class="tx" style="left:736.4px;top:190.09px;font-size:11.4px;line-height:14.82px;color:#9a9a9a;">Texture</div>
<div class="a" style="left:778px;top:201px;width:115px;height:1px;background:#4f4f4f;"></div>
<div class="tx" style="left:898px;top:190.09px;font-size:11.4px;line-height:14.82px;color:#9a9a9a;">Center</div>
<div class="a" style="left:936px;top:201px;width:24px;height:1px;background:#4f4f4f;"></div>
<div class="tx" style="left:964px;top:190.09px;font-size:11.4px;line-height:14.82px;color:#9a9a9a;">Options</div>
<div class="a" style="left:1006px;top:201px;width:86px;height:1px;background:#4f4f4f;"></div>
<div class="a" style="left:699.3px;top:205px;width:31.2px;height:31.7px;background:#262626;"></div>
<div class="a" style="left:733.7px;top:205px;width:30.9px;height:31.7px;background:#262626;"></div>
<div class="a" style="left:1056.7px;top:205px;width:32.9px;height:31.7px;background:#262626;"></div>
<svg class="a" style="left:604px;top:208px;" width="26" height="26" viewBox="0 0 26 26"><path d="M1 8 V1 H8 M18 1 H25 V8 M25 18 V25 H18 M8 25 H1 V18" fill="none" stroke="#a9a9a9" stroke-width="2.2"/><rect x="7" y="8" width="12" height="10" fill="#a9a9a9"/></svg>
<svg class="a" style="left:638px;top:208px;" width="26" height="26" viewBox="0 0 26 26"><circle cx="13" cy="13" r="12" fill="#a9a9a9"/></svg>
<svg class="a" style="left:669.6px;top:208px;" width="26" height="26" viewBox="0 0 26 26"><circle cx="13" cy="13" r="11.5" fill="none" stroke="#a9a9a9" stroke-width="1"/><ellipse cx="13" cy="13" rx="7.199999999999999" ry="11.5" fill="none" stroke="#a9a9a9" stroke-width="1"/><path d="M13 1 V25" stroke="#a9a9a9" stroke-width="1.1"/><path d="M2.9780241469059607 6.3999999999999995 Q13 8.899999999999999 23.02197585309404 6.3999999999999995" fill="none" stroke="#a9a9a9" stroke-width="1"/><path d="M1.0 13.0 Q13 15.5 25.0 13.0" fill="none" stroke="#a9a9a9" stroke-width="1"/><path d="M2.9780241469059607 19.6 Q13 22.1 23.02197585309404 19.6" fill="none" stroke="#a9a9a9" stroke-width="1"/></svg>
<svg class="a" style="left:702px;top:208px;" width="26" height="26" viewBox="0 0 26 26"><circle cx="13" cy="13" r="12" fill="#a0a0a0"/><circle cx="13" cy="13" r="11.5" fill="none" stroke="#b8b8b8" stroke-width="1"/><ellipse cx="13" cy="13" rx="7.199999999999999" ry="11.5" fill="none" stroke="#3a3a3a" stroke-width="1"/><path d="M13 1 V25" stroke="#333" stroke-width="1.2"/><path d="M2.9780241469059607 6.3999999999999995 Q13 8.899999999999999 23.02197585309404 6.3999999999999995" fill="none" stroke="#333" stroke-width="1"/><path d="M1.0 13.0 Q13 15.5 25.0 13.0" fill="none" stroke="#333" stroke-width="1"/><path d="M2.9780241469059607 19.6 Q13 22.1 23.02197585309404 19.6" fill="none" stroke="#333" stroke-width="1"/></svg>
<svg class="a" style="left:736px;top:208px;" width="26" height="26" viewBox="0 0 26 26"><circle cx="13" cy="13" r="12" fill="#a9a9a9"/></svg>
<svg class="a" style="left:767.8px;top:208px;" width="26" height="26" viewBox="0 0 26 26"><defs><clipPath id="ck780"><circle cx="13" cy="13" r="12"/></clipPath></defs><g clip-path="url(#ck780)"><rect x="0" y="0" width="26" height="26" fill="#555"/><rect x="0" y="0" width="4" height="4" fill="#b0b0b0"/><rect x="0" y="8" width="4" height="4" fill="#b0b0b0"/><rect x="0" y="16" width="4" height="4" fill="#b0b0b0"/><rect x="0" y="24" width="4" height="4" fill="#b0b0b0"/><rect x="4" y="4" width="4" height="4" fill="#b0b0b0"/><rect x="4" y="12" width="4" height="4" fill="#b0b0b0"/><rect x="4" y="20" width="4" height="4" fill="#b0b0b0"/><rect x="8" y="0" width="4" height="4" fill="#b0b0b0"/><rect x="8" y="8" width="4" height="4" fill="#b0b0b0"/><rect x="8" y="16" width="4" height="4" fill="#b0b0b0"/><rect x="8" y="24" width="4" height="4" fill="#b0b0b0"/><rect x="12" y="4" width="4" height="4" fill="#b0b0b0"/><rect x="12" y="12" width="4" height="4" fill="#b0b0b0"/><rect x="12" y="20" width="4" height="4" fill="#b0b0b0"/><rect x="16" y="0" width="4" height="4" fill="#b0b0b0"/><rect x="16" y="8" width="4" height="4" fill="#b0b0b0"/><rect x="16" y="16" width="4" height="4" fill="#b0b0b0"/><rect x="16" y="24" width="4" height="4" fill="#b0b0b0"/><rect x="20" y="4" width="4" height="4" fill="#b0b0b0"/><rect x="20" y="12" width="4" height="4" fill="#b0b0b0"/><rect x="20" y="20" width="4" height="4" fill="#b0b0b0"/><rect x="24" y="0" width="4" height="4" fill="#b0b0b0"/><rect x="24" y="8" width="4" height="4" fill="#b0b0b0"/><rect x="24" y="16" width="4" height="4" fill="#b0b0b0"/><rect x="24" y="24" width="4" height="4" fill="#b0b0b0"/></g></svg>
<svg class="a" style="left:799.8px;top:208px;" width="26" height="26" viewBox="0 0 26 26"><circle cx="13" cy="13" r="12" fill="#8a8a8a"/><circle cx="9" cy="9" r="3" fill="#9a9a9a"/><circle cx="18" cy="15" r="3" fill="#7a7a7a"/><circle cx="11" cy="19" r="3" fill="#999"/></svg>
<svg class="a" style="left:831.3px;top:208px;" width="26" height="26" viewBox="0 0 26 26"><defs><clipPath id="mt844"><circle cx="13" cy="13" r="12"/></clipPath></defs><circle cx="13" cy="13" r="12" fill="#6a6a6a"/><g clip-path="url(#mt844)"><path d="M0 26 L9 11 L16 18 L20 14 L26 26 Z" fill="#a5a5a5"/></g><circle cx="17" cy="8" r="3.5" fill="#fff"/></svg>
<svg class="a" style="left:864.3px;top:208px;" width="26" height="26" viewBox="0 0 26 26"><defs><clipPath id="mu877"><circle cx="13" cy="13" r="12"/></clipPath></defs><circle cx="13" cy="13" r="12" fill="#666"/><g clip-path="url(#mu877)"><path d="M0 26 L9 12 L16 19 L20 15 L26 26 Z" fill="#9a9a9a"/></g><circle cx="16" cy="8" r="3" fill="#bbb"/></svg>
<svg class="a" style="left:896px;top:206px;" width="30" height="30" viewBox="0 0 30 30"><path d="M15 0 V9 M15 21 V30 M0 15 H9 M21 15 H30" stroke="#f26a1b" stroke-width="1.6"/><path d="M15 10 L12 5.5 L18 5.5 Z M15 20 L12 24.5 L18 24.5 Z M10 15 L5.5 12 L5.5 18 Z M20 15 L24.5 12 L24.5 18 Z" fill="#f26a1b"/><circle cx="15" cy="15" r="2.6" fill="#aaa"/></svg>
<svg class="a" style="left:927.9px;top:206px;" width="30" height="30" viewBox="0 0 30 30"><path d="M15 0 V9 M15 21 V30 M0 15 H9 M21 15 H30" stroke="#f26a1b" stroke-width="1.6"/><path d="M15 10 L12 5.5 L18 5.5 Z M15 20 L12 24.5 L18 24.5 Z M10 15 L5.5 12 L5.5 18 Z M20 15 L24.5 12 L24.5 18 Z" fill="#f26a1b"/><circle cx="15" cy="15" r="5.5" fill="none" stroke="#aaa" stroke-width="1"/><ellipse cx="15" cy="15" rx="2.5" ry="5.5" fill="none" stroke="#aaa" stroke-width="0.8"/><path d="M9.5 15 H20.5" stroke="#aaa" stroke-width="0.8"/></svg>
<svg class="a" style="left:968.6px;top:209px;" width="18" height="25" viewBox="0 0 18 25"><circle cx="9" cy="8" r="7.5" fill="#f2f2f2"/><path d="M4 12 L14 12 L13 22 Q9 25 5 22 Z" fill="#9a9a9a"/><circle cx="9" cy="8" r="6.5" fill="#fafafa"/></svg>
<svg class="a" style="left:996px;top:207px;" width="28" height="28" viewBox="0 0 28 28"><path d="M5 12 A9 9 0 0 1 22 8" fill="none" stroke="#4fd0e0" stroke-width="2.4"/><path d="M23 16 A9 9 0 0 1 6 20" fill="none" stroke="#4fd0e0" stroke-width="2.4"/><path d="M22 3 L24 10 L17 9Z M6 25 L4 18 L11 19Z" fill="#4fd0e0"/><rect x="9" y="12" width="10" height="8" fill="#f26a1b"/><path d="M11 12 V9.5 A3 3 0 0 1 17 9.5 V12" fill="none" stroke="#f26a1b" stroke-width="1.6"/></svg>
<svg class="a" style="left:1031px;top:211px;" width="20" height="20" viewBox="0 0 20 20"><rect width="20" height="20" fill="#777"/><rect x="0" y="0" width="4" height="4" fill="#c8c8c8"/><rect x="0" y="8" width="4" height="4" fill="#c8c8c8"/><rect x="0" y="16" width="4" height="4" fill="#c8c8c8"/><rect x="4" y="4" width="4" height="4" fill="#c8c8c8"/><rect x="4" y="12" width="4" height="4" fill="#c8c8c8"/><rect x="8" y="0" width="4" height="4" fill="#c8c8c8"/><rect x="8" y="8" width="4" height="4" fill="#c8c8c8"/><rect x="8" y="16" width="4" height="4" fill="#c8c8c8"/><rect x="12" y="4" width="4" height="4" fill="#c8c8c8"/><rect x="12" y="12" width="4" height="4" fill="#c8c8c8"/><rect x="16" y="0" width="4" height="4" fill="#c8c8c8"/><rect x="16" y="8" width="4" height="4" fill="#c8c8c8"/><rect x="16" y="16" width="4" height="4" fill="#c8c8c8"/></svg>
<svg class="a" style="left:1060px;top:208px;" width="26" height="26" viewBox="0 0 26 26"><circle cx="13" cy="13" r="11.5" fill="#a9a9a9" stroke="#f26a1b" stroke-width="1.5"/></svg>
<svg class="a" style="left:1089px;top:216px;" width="8" height="10" viewBox="0 0 8 10"><circle cx="6" cy="5" r="3.5" fill="none" stroke="#f26a1b" stroke-width="1.5"/></svg>
<div class="a" style="left:598px;top:241px;width:497px;height:528px;background:#262626;"></div>
<div class="a" style="left:598px;top:775px;width:497px;height:82px;background:#3d3d3d;"></div>
<div class="a" style="left:598px;top:775px;width:480px;height:24px;background:#1f1f1f;"></div>
<div class="tx" style="left:602.8px;top:779.83px;font-size:13.5px;line-height:17.55px;color:#dadada;font-weight:bold;">Transform</div>
<div class="tx" style="left:934.5px;width:300px;text-align:center;top:780.2px;font-size:12px;line-height:15.6px;color:#b0b0b0;">?</div>
<div class="a" style="left:598px;top:799px;width:495px;height:58px;background:#474747;"></div>
<div class="tx" style="left:472.29999999999995px;width:300px;text-align:center;top:808.59px;font-size:11.4px;line-height:14.82px;color:#d2d2d2;">Local</div>
<div class="a" style="left:649px;top:804.2px;width:44.4px;height:22.6px;background:#262626;"></div>
<div class="tx" style="left:520.8px;width:300px;text-align:center;top:808.59px;font-size:11.4px;line-height:14.82px;color:#f26a1b;">Center</div>
<div class="tx" style="left:567.7px;width:300px;text-align:center;top:808.59px;font-size:11.4px;line-height:14.82px;color:#d2d2d2;">Mouse</div>
<div class="a" style="left:603px;top:828.5px;width:39.7px;height:22.5px;background:#262626;"></div>
<div class="tx" style="left:472.29999999999995px;width:300px;text-align:center;top:833.29px;font-size:11.4px;line-height:14.82px;color:#f26a1b;">World</div>
<div class="tx" style="left:520.8px;width:300px;text-align:center;top:833.29px;font-size:11.4px;line-height:14.82px;color:#d2d2d2;">Multi</div>
<div class="tx" style="left:567.7px;width:300px;text-align:center;top:833.29px;font-size:11.4px;line-height:14.82px;color:#d2d2d2;">User</div>
<div class="a" style="left:747.2px;top:804.2px;width:22.5px;height:22.6px;background:#262626;"></div>
<div class="a" style="left:770px;top:804.2px;width:102px;height:22.6px;background:#434343;"></div>
<div class="a" style="left:874.5px;top:804.2px;width:22.5px;height:22.6px;background:#262626;"></div>
<div class="a" style="left:897px;top:804.2px;width:102px;height:22.6px;background:#434343;"></div>
<div class="a" style="left:747.2px;top:828.5px;width:22.5px;height:22.6px;background:#262626;"></div>
<div class="a" style="left:770px;top:828.5px;width:102px;height:22.6px;background:#434343;"></div>
<div class="a" style="left:874.5px;top:828.5px;width:22.5px;height:22.6px;background:#262626;"></div>
<div class="a" style="left:897px;top:828.5px;width:102px;height:22.6px;background:#434343;"></div>
<div class="tx" style="left:608.3px;width:300px;text-align:center;top:808.59px;font-size:11.4px;line-height:14.82px;color:#f26a1b;">Tu</div>
<div class="tx" style="left:608.3px;width:300px;text-align:center;top:833.29px;font-size:11.4px;line-height:14.82px;color:#f26a1b;">Tv</div>
<div class="tx" style="left:735.6px;width:300px;text-align:center;top:808.59px;font-size:11.4px;line-height:14.82px;color:#f26a1b;">Su</div>
<div class="tx" style="left:735.6px;width:300px;text-align:center;top:833.29px;font-size:11.4px;line-height:14.82px;color:#f26a1b;">Sv</div>
<div class="tx" style="left:774.6px;top:809.09px;font-size:11.4px;line-height:14.82px;color:#d2d2d2;">0</div>
<div class="tx" style="left:774.6px;top:833.79px;font-size:11.4px;line-height:14.82px;color:#d2d2d2;">0</div>
<div class="tx" style="left:901.6px;top:809.09px;font-size:11.4px;line-height:14.82px;color:#d2d2d2;">0</div>
<div class="tx" style="left:901.6px;top:833.79px;font-size:11.4px;line-height:14.82px;color:#d2d2d2;">0</div>
<svg class="a" style="left:854px;top:805px;" width="12" height="22" viewBox="0 0 12 22"><path d="M6 1 L11 9 L1 9 Z M1 13 L11 13 L6 21 Z" fill="#a0a0a0" opacity="1"/></svg>
<svg class="a" style="left:854px;top:829.7px;" width="12" height="22" viewBox="0 0 12 22"><path d="M6 1 L11 9 L1 9 Z M1 13 L11 13 L6 21 Z" fill="#a0a0a0" opacity="1"/></svg>
<svg class="a" style="left:980.6px;top:805px;" width="12" height="22" viewBox="0 0 12 22"><path d="M6 1 L11 9 L1 9 Z M1 13 L11 13 L6 21 Z" fill="#a0a0a0" opacity="1"/></svg>
<svg class="a" style="left:980.6px;top:829.7px;" width="12" height="22" viewBox="0 0 12 22"><path d="M6 1 L11 9 L1 9 Z M1 13 L11 13 L6 21 Z" fill="#a0a0a0" opacity="1"/></svg>
<div class="tx" style="left:860.5px;width:300px;text-align:center;top:807.59px;font-size:11.4px;line-height:14.82px;color:#d2d2d2;">Rw</div>
<div class="tx" style="left:891px;width:300px;text-align:center;top:808.59px;font-size:11.4px;line-height:14.82px;color:#d2d2d2;">+90</div>
<div class="tx" style="left:922.3px;width:300px;text-align:center;top:808.59px;font-size:11.4px;line-height:14.82px;color:#d2d2d2;">-90</div>
<div class="tx" style="left:860.5px;width:300px;text-align:center;top:833.29px;font-size:11.4px;line-height:14.82px;color:#d2d2d2;">In</div>
<div class="tx" style="left:906.7px;width:300px;text-align:center;top:832.79px;font-size:11.4px;line-height:14.82px;color:#d2d2d2;">180</div>
<div class="tx" style="left:612.6px;top:859px;transform-origin:0 0;transform:rotate(90deg);font-size:13.5px;line-height:15px;color:#dadada;font-weight:bold">Gri</div>
<div class="tx" style="left:643px;top:859px;transform-origin:0 0;transform:rotate(90deg);font-size:13.5px;line-height:15px;color:#dadada;font-weight:bold">UV</div>
<div class="tx" style="left:674px;top:859px;transform-origin:0 0;transform:rotate(90deg);font-size:13.5px;line-height:15px;color:#dadada;font-weight:bold">Mu</div>
<div class="a" style="left:1100px;top:187px;width:340px;height:693px;background:#1f1f1f;"></div>
<div class="a" style="left:1100px;top:188px;width:340px;height:21.5px;background:#1c1c1c;"></div>
<div class="tx" style="left:1104.5px;top:190.66px;font-size:13.6px;line-height:17.68px;color:#dcdcdc;font-weight:bold;">Select</div>
<div class="a" style="left:1100px;top:216px;width:340px;height:21.5px;background:#1c1c1c;"></div>
<div class="tx" style="left:1104.5px;top:218.66px;font-size:13.6px;line-height:17.68px;color:#dcdcdc;font-weight:bold;">Align | Straighten | Flip | Fit | Stack</div>
<div class="a" style="left:1100px;top:244px;width:340px;height:21.5px;background:#1c1c1c;"></div>
<div class="tx" style="left:1104.5px;top:246.66px;font-size:13.6px;line-height:17.68px;color:#dcdcdc;font-weight:bold;">Edge Loop Parameters</div>
<div class="a" style="left:1100px;top:272px;width:340px;height:21.5px;background:#1c1c1c;"></div>
<div class="tx" style="left:1104.5px;top:274.66px;font-size:13.6px;line-height:17.68px;color:#dcdcdc;font-weight:bold;">Auto Seams | Full AUTO UVs</div>
<div class="a" style="left:1100px;top:300px;width:340px;height:21.5px;background:#1c1c1c;"></div>
<div class="tx" style="left:1104.5px;top:302.66px;font-size:13.6px;line-height:17.68px;color:#dcdcdc;font-weight:bold;">Multi UV Sets</div>
<div class="a" style="left:1100px;top:328px;width:340px;height:21.5px;background:#1c1c1c;"></div>
<div class="tx" style="left:1104.5px;top:330.66px;font-size:13.6px;line-height:17.68px;color:#dcdcdc;font-weight:bold;">Proportional</div>
<div class="a" style="left:1100px;top:356px;width:340px;height:21.5px;background:#1c1c1c;"></div>
<div class="tx" style="left:1104.5px;top:358.66px;font-size:13.6px;line-height:17.68px;color:#dcdcdc;font-weight:bold;">Real Time Optimize</div>
<div class="a" style="left:1100px;top:384px;width:340px;height:21.5px;background:#1c1c1c;"></div>
<div class="tx" style="left:1104.5px;top:386.66px;font-size:13.6px;line-height:17.68px;color:#dcdcdc;font-weight:bold;">Help Select (Edges)</div>
<div class="a" style="left:1395px;top:327.4px;width:45px;height:22.6px;background:#3a3a3a;"></div>
<div class="tx" style="left:1267.5px;width:300px;text-align:center;top:331.72px;font-size:11.2px;line-height:14.56px;color:#c4c4c4;">enable</div>
<div class="a" style="left:1395px;top:355.3px;width:45px;height:22.5px;background:#3a3a3a;"></div>
<div class="tx" style="left:1267.5px;width:300px;text-align:center;top:359.72px;font-size:11.2px;line-height:14.56px;color:#c4c4c4;">enable</div>
<div class="a" style="left:1100px;top:406px;width:340px;height:474px;background:#454545;"></div>
<div class="tx" style="left:1106.5px;top:409.35px;font-size:11px;line-height:14.3px;color:#8c8c8c;">Tip(s)</div>
<div class="tx" style="left:1107px;top:425.63px;font-size:11.8px;line-height:15.34px;color:#d8d8d8;">Select some edges then hit key 'C' for cut and 'W' for weld/unc</div>
<div class="tx" style="left:1106.5px;top:509.85px;font-size:11px;line-height:14.3px;color:#8c8c8c;">Mouse Interaction</div>
<div class="a" style="left:1200px;top:520px;width:237px;height:1px;background:#555;"></div>
<div class="tx" style="left:1119.8px;width:300px;text-align:center;top:531.99px;font-size:11.4px;line-height:14.82px;color:#d8d8d8;">Configure Interaction...</div>
<div class="tx" style="left:1107.3px;top:551.89px;font-size:11.4px;line-height:14.82px;color:#d0d0d0;">LMB-Alt</div>
<div class="tx" style="left:1205px;top:553.41px;font-size:10.6px;line-height:13.78px;color:#d0d0d0;">ORBIT</div>
<div class="tx" style="left:1107.3px;top:570.87px;font-size:11.4px;line-height:14.82px;color:#d0d0d0;">RMB-Alt</div>
<div class="tx" style="left:1205px;top:572.39px;font-size:10.6px;line-height:13.78px;color:#d0d0d0;">ZOOM</div>
<div class="tx" style="left:1107.3px;top:589.85px;font-size:11.4px;line-height:14.82px;color:#d0d0d0;">MMB-Alt</div>
<div class="tx" style="left:1205px;top:591.37px;font-size:10.6px;line-height:13.78px;color:#d0d0d0;">PAN</div>
<div class="tx" style="left:1107.3px;top:608.83px;font-size:11.4px;line-height:14.82px;color:#d0d0d0;">LMB</div>
<div class="tx" style="left:1205px;top:610.35px;font-size:10.6px;line-height:13.78px;color:#d0d0d0;">SELECT</div>
<div class="tx" style="left:1107.3px;top:627.81px;font-size:11.4px;line-height:14.82px;color:#d0d0d0;">LMB-Ctrl</div>
<div class="tx" style="left:1205px;top:629.33px;font-size:10.6px;line-height:13.78px;color:#d0d0d0;">ADD_SELECT</div>
<div class="tx" style="left:1107.3px;top:646.79px;font-size:11.4px;line-height:14.82px;color:#d0d0d0;">LMB-Shift-Ctrl</div>
<div class="tx" style="left:1205px;top:648.31px;font-size:10.6px;line-height:13.78px;color:#d0d0d0;">DESELECT</div>
<div class="tx" style="left:1107.3px;top:665.77px;font-size:11.4px;line-height:14.82px;color:#d0d0d0;">LMB-Shift</div>
<div class="tx" style="left:1205px;top:667.29px;font-size:10.6px;line-height:13.78px;color:#d0d0d0;">ADD_SELECT_SHORT_PATH</div>
<div class="tx" style="left:1107.3px;top:684.75px;font-size:11.4px;line-height:14.82px;color:#d0d0d0;">DLMB</div>
<div class="tx" style="left:1205px;top:686.27px;font-size:10.6px;line-height:13.78px;color:#d0d0d0;">SELECT_LOOP_PATH</div>
<div class="tx" style="left:1107.3px;top:703.73px;font-size:11.4px;line-height:14.82px;color:#d0d0d0;">DLMB-Ctrl</div>
<div class="tx" style="left:1205px;top:705.25px;font-size:10.6px;line-height:13.78px;color:#d0d0d0;">ADD_SELECT_LOOP_PATH</div>
<div class="tx" style="left:1107.3px;top:722.71px;font-size:11.4px;line-height:14.82px;color:#d0d0d0;">DLMB-Shift-Ctrl</div>
<div class="tx" style="left:1205px;top:724.23px;font-size:10.6px;line-height:13.78px;color:#d0d0d0;">DESELECT_PATH</div>
<div class="tx" style="left:1107.3px;top:741.69px;font-size:11.4px;line-height:14.82px;color:#d0d0d0;">MMB-Space</div>
<div class="tx" style="left:1205px;top:743.21px;font-size:10.6px;line-height:13.78px;color:#d0d0d0;">SELECT_TRANSLATE</div>
<div class="tx" style="left:1107.3px;top:760.67px;font-size:11.4px;line-height:14.82px;color:#d0d0d0;">RMB-Space</div>
<div class="tx" style="left:1205px;top:762.19px;font-size:10.6px;line-height:13.78px;color:#d0d0d0;">SELECT_ROTATE</div>
<div class="tx" style="left:1107.3px;top:779.65px;font-size:11.4px;line-height:14.82px;color:#d0d0d0;">LMB-Space</div>
<div class="tx" style="left:1205px;top:781.17px;font-size:10.6px;line-height:13.78px;color:#d0d0d0;">SELECT_SCALE</div>
<div class="tx" style="left:1107.3px;top:798.63px;font-size:11.4px;line-height:14.82px;color:#d0d0d0;">MMB-Ctrl-Space</div>
<div class="tx" style="left:1205px;top:800.15px;font-size:10.6px;line-height:13.78px;color:#d0d0d0;">ADD_SELECT_TRANSLATE</div>
<div class="tx" style="left:1107.3px;top:817.61px;font-size:11.4px;line-height:14.82px;color:#d0d0d0;">RMB-Ctrl-Space</div>
<div class="tx" style="left:1205px;top:819.13px;font-size:10.6px;line-height:13.78px;color:#d0d0d0;">ADD_SELECT_ROTATE</div>
<div class="tx" style="left:1107.3px;top:836.59px;font-size:11.4px;line-height:14.82px;color:#d0d0d0;">LMB-Ctrl-Space</div>
<div class="tx" style="left:1205px;top:838.11px;font-size:10.6px;line-height:13.78px;color:#d0d0d0;">ADD_SELECT_SCALE</div>
<div class="tx" style="left:1107.3px;top:855.57px;font-size:11.4px;line-height:14.82px;color:#d0d0d0;">MMB-D</div>
<div class="tx" style="left:1205px;top:857.09px;font-size:10.6px;line-height:13.78px;color:#d0d0d0;">TRANSLATE_ISLAND</div>
<div class="tx" style="left:1107.3px;top:874.55px;font-size:11.4px;line-height:14.82px;color:#d0d0d0;">RMB-D</div>
<div class="tx" style="left:1205px;top:876.07px;font-size:10.6px;line-height:13.78px;color:#d0d0d0;">ROTATE_ISLAND</div>
<div class="a" style="left:1100px;top:880px;width:355px;height:5px;background:#232323;"></div>
<div class="a" style="left:1440px;top:187px;width:5px;height:693px;background:#232323;"></div>
<div class="a" style="left:1445px;top:187px;width:10px;height:643px;background:#3b3b3b;"></div>
<div class="a" style="left:15px;top:879px;width:1440px;height:6px;background:#1f1f1f;"></div>
<div class="a" style="left:15px;top:885px;width:1440px;height:50px;background:#3e3e3e;"></div>
<div class="a" style="left:15px;top:885px;width:34px;height:50px;background:#434343;"></div>
<div class="a" style="left:27px;top:903px;width:14px;height:14px;background:#f55a00;"></div>
<div class="a" style="left:50px;top:888px;width:230px;height:44px;background:#1f1f1f;"></div>
<div class="tx" style="left:52px;top:889.89px;font-size:11.4px;line-height:14.82px;color:#d8d8d8;">EDGES</div>
<div class="tx" style="left:52px;top:914.66px;font-size:11.9px;line-height:15.47px;color:#d8d8d8;">Selected: 0 | Hidden: 0 | Total: 586329</div>
<div class="a" style="left:280px;top:885px;width:140px;height:50px;background:#434343;"></div>
<div class="tx" style="left:156px;width:300px;text-align:center;top:902.89px;font-size:11.4px;line-height:14.82px;color:#d2d2d2;">Off</div>
<div class="tx" style="left:192.89999999999998px;width:300px;text-align:center;top:891.59px;font-size:11.4px;line-height:14.82px;color:#d2d2d2;">Topo</div>
<div class="a" style="left:365.2px;top:888px;width:47.8px;height:23px;background:#262626;"></div>
<div class="tx" style="left:239px;width:300px;text-align:center;top:891.59px;font-size:11.4px;line-height:14.82px;color:#f26a1b;">Stretch</div>
<div class="tx" style="left:192.89999999999998px;width:300px;text-align:center;top:915.09px;font-size:11.4px;line-height:14.82px;color:#d2d2d2;">Mat ID</div>
<div class="tx" style="left:239px;width:300px;text-align:center;top:915.09px;font-size:11.4px;line-height:14.82px;color:#d2d2d2;">Texel D</div>
<div class="a" style="left:440px;top:887px;width:816px;height:21px;background:linear-gradient(90deg,#d41e0a 0%,#cf2a16 12%,#bf5a4e 28%,#a88d86 42%,#8fa3a3 52%,#6b98bc 68%,#3f86d2 84%,#1977d8 100%);"></div>
<div class="tx" style="left:696.5px;width:300px;text-align:center;top:889.59px;font-size:11.4px;line-height:14.82px;color:rgba(230,230,230,0.55);">Stretch</div>
<div class="a" style="left:440.0px;top:908px;width:1.0px;height:3px;background:#7a7a7a;"></div>
<div class="tx" style="left:291.0px;width:300px;text-align:center;top:909.89px;font-size:11.4px;line-height:14.82px;color:#c8c8c8;">0</div>
<div class="a" style="left:530.6666666666666px;top:908px;width:1.0px;height:3px;background:#7a7a7a;"></div>
<div class="tx" style="left:380.66666666666663px;width:300px;text-align:center;top:909.89px;font-size:11.4px;line-height:14.82px;color:#c8c8c8;">0.2222</div>
<div class="a" style="left:621.3333333333334px;top:908px;width:1.0px;height:3px;background:#7a7a7a;"></div>
<div class="tx" style="left:471.33333333333337px;width:300px;text-align:center;top:909.89px;font-size:11.4px;line-height:14.82px;color:#c8c8c8;">0.4444</div>
<div class="a" style="left:712.0px;top:908px;width:1.0px;height:3px;background:#7a7a7a;"></div>
<div class="tx" style="left:562.0px;width:300px;text-align:center;top:909.89px;font-size:11.4px;line-height:14.82px;color:#c8c8c8;">0.6667</div>
<div class="a" style="left:802.6666666666667px;top:908px;width:1.0px;height:3px;background:#7a7a7a;"></div>
<div class="tx" style="left:652.6666666666667px;width:300px;text-align:center;top:909.89px;font-size:11.4px;line-height:14.82px;color:#c8c8c8;">0.8889</div>
<div class="a" style="left:893.3333333333334px;top:908px;width:1.0px;height:3px;background:#7a7a7a;"></div>
<div class="tx" style="left:743.3333333333334px;width:300px;text-align:center;top:909.89px;font-size:11.4px;line-height:14.82px;color:#c8c8c8;">1.111</div>
<div class="a" style="left:984.0px;top:908px;width:1.0px;height:3px;background:#7a7a7a;"></div>
<div class="tx" style="left:834.0px;width:300px;text-align:center;top:909.89px;font-size:11.4px;line-height:14.82px;color:#c8c8c8;">1.333</div>
<div class="a" style="left:1074.6666666666667px;top:908px;width:1.0px;height:3px;background:#7a7a7a;"></div>
<div class="tx" style="left:924.6666666666667px;width:300px;text-align:center;top:909.89px;font-size:11.4px;line-height:14.82px;color:#c8c8c8;">1.556</div>
<div class="a" style="left:1165.3333333333335px;top:908px;width:1.0px;height:3px;background:#7a7a7a;"></div>
<div class="tx" style="left:1015.3333333333335px;width:300px;text-align:center;top:909.89px;font-size:11.4px;line-height:14.82px;color:#c8c8c8;">1.778</div>
<div class="a" style="left:1256.0px;top:908px;width:1.0px;height:3px;background:#7a7a7a;"></div>
<div class="tx" style="left:1106.0px;width:300px;text-align:center;top:909.89px;font-size:11.4px;line-height:14.82px;color:#c8c8c8;">2</div>
<div class="tx" style="left:1276.7px;top:887.89px;font-size:11.4px;line-height:14.82px;color:#9a9a9a;">Support</div>
<div class="a" style="left:1320px;top:898px;width:128px;height:1px;background:#555;"></div>
<div class="tx" style="left:1138px;width:300px;text-align:center;top:910.59px;font-size:11.4px;line-height:14.82px;color:#d2d2d2;">Bug</div>
<div class="tx" style="left:1186.6px;width:300px;text-align:center;top:910.59px;font-size:11.4px;line-height:14.82px;color:#d2d2d2;">F. Request</div>
<div class="tx" style="left:1259.3px;width:300px;text-align:center;top:910.59px;font-size:11.4px;line-height:14.82px;color:#d2d2d2;">New Release</div>
<div class="a" style="left:15px;top:935px;width:1440px;height:5px;background:#1f1f1f;"></div>
<div class="a" style="left:15px;top:940px;width:1440px;height:24px;background:linear-gradient(#ececec,#dcdcdc);"></div>
<div class="tx" style="left:20px;top:945.09px;font-size:11.55px;line-height:15.02px;color:#4e4e4e;">Camera distance to focus point: 18409.141356. To near plane: 184.091414. To far plane: 184091.413560</div>
<svg class="a" style="left:598px;top:241px" width="497" height="528" viewBox="598 241 497 528"><rect x="637.4" y="241" width="1.2" height="527" fill="#434343"/><rect x="729.65" y="241" width="1.2" height="527" fill="#434343"/><rect x="821.9" y="241" width="1.2" height="527" fill="#434343"/><rect x="914.15" y="241" width="1.2" height="527" fill="#434343"/><rect x="1006.4" y="241" width="1.2" height="527" fill="#434343"/><rect x="598" y="326.1" width="497" height="1.2" fill="#434343"/><rect x="598" y="418.35" width="497" height="1.2" fill="#434343"/><rect x="598" y="510.6" width="497" height="1.2" fill="#434343"/><rect x="598" y="602.85" width="497" height="1.2" fill="#434343"/><rect x="598" y="695.1" width="497" height="1.2" fill="#434343"/><rect x="598.5" y="252.3" width="5" height="1" fill="#5a5a5a"/><rect x="598.5" y="261.52500000000003" width="5" height="1" fill="#5a5a5a"/><rect x="598.5" y="270.75" width="5" height="1" fill="#5a5a5a"/><rect x="598.5" y="279.975" width="12" height="1" fill="#5a5a5a"/><rect x="598.5" y="289.20000000000005" width="5" height="1" fill="#5a5a5a"/><rect x="598.5" y="298.425" width="5" height="1" fill="#5a5a5a"/><rect x="598.5" y="307.65000000000003" width="5" height="1" fill="#5a5a5a"/><rect x="598.5" y="316.875" width="5" height="1" fill="#5a5a5a"/><rect x="598.5" y="326.1" width="20" height="1" fill="#5a5a5a"/><rect x="598.5" y="335.32500000000005" width="5" height="1" fill="#5a5a5a"/><rect x="598.5" y="344.55" width="5" height="1" fill="#5a5a5a"/><rect x="598.5" y="353.77500000000003" width="5" height="1" fill="#5a5a5a"/><rect x="598.5" y="363.0" width="5" height="1" fill="#5a5a5a"/><rect x="598.5" y="372.225" width="12" height="1" fill="#5a5a5a"/><rect x="598.5" y="381.45000000000005" width="5" height="1" fill="#5a5a5a"/><rect x="598.5" y="390.675" width="5" height="1" fill="#5a5a5a"/><rect x="598.5" y="399.90000000000003" width="5" height="1" fill="#5a5a5a"/><rect x="598.5" y="409.125" width="5" height="1" fill="#5a5a5a"/><rect x="598.5" y="418.35" width="20" height="1" fill="#5a5a5a"/><rect x="598.5" y="427.57500000000005" width="5" height="1" fill="#5a5a5a"/><rect x="598.5" y="436.8" width="5" height="1" fill="#5a5a5a"/><rect x="598.5" y="446.02500000000003" width="5" height="1" fill="#5a5a5a"/><rect x="598.5" y="455.25" width="5" height="1" fill="#5a5a5a"/><rect x="598.5" y="464.475" width="12" height="1" fill="#5a5a5a"/><rect x="598.5" y="473.70000000000005" width="5" height="1" fill="#5a5a5a"/><rect x="598.5" y="482.925" width="5" height="1" fill="#5a5a5a"/><rect x="598.5" y="492.15000000000003" width="5" height="1" fill="#5a5a5a"/><rect x="598.5" y="501.375" width="5" height="1" fill="#5a5a5a"/><rect x="598.5" y="510.6" width="20" height="1" fill="#5a5a5a"/><rect x="598.5" y="519.825" width="5" height="1" fill="#5a5a5a"/><rect x="598.5" y="529.05" width="5" height="1" fill="#5a5a5a"/><rect x="598.5" y="538.2750000000001" width="5" height="1" fill="#5a5a5a"/><rect x="598.5" y="547.5" width="5" height="1" fill="#5a5a5a"/><rect x="598.5" y="556.725" width="12" height="1" fill="#5a5a5a"/><rect x="598.5" y="565.95" width="5" height="1" fill="#5a5a5a"/><rect x="598.5" y="575.175" width="5" height="1" fill="#5a5a5a"/><rect x="598.5" y="584.4000000000001" width="5" height="1" fill="#5a5a5a"/><rect x="598.5" y="593.625" width="5" height="1" fill="#5a5a5a"/><rect x="598.5" y="602.85" width="20" height="1" fill="#5a5a5a"/><rect x="598.5" y="612.075" width="5" height="1" fill="#5a5a5a"/><rect x="598.5" y="621.3" width="5" height="1" fill="#5a5a5a"/><rect x="598.5" y="630.5250000000001" width="5" height="1" fill="#5a5a5a"/><rect x="598.5" y="639.75" width="5" height="1" fill="#5a5a5a"/><rect x="598.5" y="648.975" width="12" height="1" fill="#5a5a5a"/><rect x="598.5" y="658.2" width="5" height="1" fill="#5a5a5a"/><rect x="598.5" y="667.425" width="5" height="1" fill="#5a5a5a"/><rect x="598.5" y="676.6500000000001" width="5" height="1" fill="#5a5a5a"/><rect x="598.5" y="685.875" width="5" height="1" fill="#5a5a5a"/><rect x="598.5" y="695.1" width="20" height="1" fill="#5a5a5a"/><rect x="598.5" y="704.325" width="5" height="1" fill="#5a5a5a"/><rect x="598.5" y="713.55" width="5" height="1" fill="#5a5a5a"/><rect x="598.5" y="722.7750000000001" width="5" height="1" fill="#5a5a5a"/><rect x="598.5" y="732.0" width="5" height="1" fill="#5a5a5a"/><rect x="598.5" y="741.225" width="12" height="1" fill="#5a5a5a"/><rect x="598.5" y="750.45" width="5" height="1" fill="#5a5a5a"/><rect x="598.5" y="759.675" width="5" height="1" fill="#5a5a5a"/><rect x="600.5" y="762.5" width="1" height="5.5" fill="#5a5a5a"/><rect x="609.725" y="762.5" width="1" height="5.5" fill="#5a5a5a"/><rect x="618.9499999999999" y="762.5" width="1" height="5.5" fill="#5a5a5a"/><rect x="628.175" y="762.5" width="1" height="5.5" fill="#5a5a5a"/><rect x="646.625" y="762.5" width="1" height="5.5" fill="#5a5a5a"/><rect x="655.85" y="762.5" width="1" height="5.5" fill="#5a5a5a"/><rect x="665.0749999999999" y="762.5" width="1" height="5.5" fill="#5a5a5a"/><rect x="674.3" y="762.5" width="1" height="5.5" fill="#5a5a5a"/><rect x="683.525" y="757" width="1" height="11" fill="#5a5a5a"/><rect x="692.75" y="762.5" width="1" height="5.5" fill="#5a5a5a"/><rect x="701.975" y="762.5" width="1" height="5.5" fill="#5a5a5a"/><rect x="711.1999999999999" y="762.5" width="1" height="5.5" fill="#5a5a5a"/><rect x="720.425" y="762.5" width="1" height="5.5" fill="#5a5a5a"/><rect x="738.875" y="762.5" width="1" height="5.5" fill="#5a5a5a"/><rect x="748.1" y="762.5" width="1" height="5.5" fill="#5a5a5a"/><rect x="757.3249999999999" y="762.5" width="1" height="5.5" fill="#5a5a5a"/><rect x="766.55" y="762.5" width="1" height="5.5" fill="#5a5a5a"/><rect x="775.775" y="757" width="1" height="11" fill="#5a5a5a"/><rect x="785.0" y="762.5" width="1" height="5.5" fill="#5a5a5a"/><rect x="794.2249999999999" y="762.5" width="1" height="5.5" fill="#5a5a5a"/><rect x="803.45" y="762.5" width="1" height="5.5" fill="#5a5a5a"/><rect x="812.675" y="762.5" width="1" height="5.5" fill="#5a5a5a"/><rect x="831.125" y="762.5" width="1" height="5.5" fill="#5a5a5a"/><rect x="840.3499999999999" y="762.5" width="1" height="5.5" fill="#5a5a5a"/><rect x="849.575" y="762.5" width="1" height="5.5" fill="#5a5a5a"/><rect x="858.8" y="762.5" width="1" height="5.5" fill="#5a5a5a"/><rect x="868.025" y="757" width="1" height="11" fill="#5a5a5a"/><rect x="877.25" y="762.5" width="1" height="5.5" fill="#5a5a5a"/><rect x="886.4749999999999" y="762.5" width="1" height="5.5" fill="#5a5a5a"/><rect x="895.7" y="762.5" width="1" height="5.5" fill="#5a5a5a"/><rect x="904.925" y="762.5" width="1" height="5.5" fill="#5a5a5a"/><rect x="923.375" y="762.5" width="1" height="5.5" fill="#5a5a5a"/><rect x="932.5999999999999" y="762.5" width="1" height="5.5" fill="#5a5a5a"/><rect x="941.825" y="762.5" width="1" height="5.5" fill="#5a5a5a"/><rect x="951.05" y="762.5" width="1" height="5.5" fill="#5a5a5a"/><rect x="960.275" y="757" width="1" height="11" fill="#5a5a5a"/><rect x="969.5" y="762.5" width="1" height="5.5" fill="#5a5a5a"/><rect x="978.7249999999999" y="762.5" width="1" height="5.5" fill="#5a5a5a"/><rect x="987.95" y="762.5" width="1" height="5.5" fill="#5a5a5a"/><rect x="997.175" y="762.5" width="1" height="5.5" fill="#5a5a5a"/><rect x="1015.625" y="762.5" width="1" height="5.5" fill="#5a5a5a"/><rect x="1024.85" y="762.5" width="1" height="5.5" fill="#5a5a5a"/><rect x="1034.075" y="762.5" width="1" height="5.5" fill="#5a5a5a"/><rect x="1043.3" y="762.5" width="1" height="5.5" fill="#5a5a5a"/><rect x="1052.525" y="757" width="1" height="11" fill="#5a5a5a"/><rect x="1061.75" y="762.5" width="1" height="5.5" fill="#5a5a5a"/><rect x="1070.975" y="762.5" width="1" height="5.5" fill="#5a5a5a"/><rect x="1080.2" y="762.5" width="1" height="5.5" fill="#5a5a5a"/><rect x="1089.425" y="762.5" width="1" height="5.5" fill="#5a5a5a"/><rect x="598" y="241" width="1" height="528" fill="#3a3a3a"/></svg>
<div class="tx" style="left:607.5px;top:313.95px;font-size:11px;line-height:14.3px;color:#8e8e8e;letter-spacing:0.3px">0.6</div>
<div class="tx" style="left:607.5px;top:406.2px;font-size:11px;line-height:14.3px;color:#8e8e8e;letter-spacing:0.3px">0.5</div>
<div class="tx" style="left:607.5px;top:498.45px;font-size:11px;line-height:14.3px;color:#8e8e8e;letter-spacing:0.3px">0.4</div>
<div class="tx" style="left:607.5px;top:590.7px;font-size:11px;line-height:14.3px;color:#8e8e8e;letter-spacing:0.3px">0.3</div>
<div class="tx" style="left:607.5px;top:682.95px;font-size:11px;line-height:14.3px;color:#8e8e8e;letter-spacing:0.3px">0.2</div>
<div class="tx" style="left:638.5px;top:748.15px;font-size:11px;line-height:14.3px;color:#8e8e8e;letter-spacing:0.3px">0.2</div>
<div class="tx" style="left:730.75px;top:748.15px;font-size:11px;line-height:14.3px;color:#8e8e8e;letter-spacing:0.3px">0.3</div>
<div class="tx" style="left:823.0px;top:748.15px;font-size:11px;line-height:14.3px;color:#8e8e8e;letter-spacing:0.3px">0.4</div>
<div class="tx" style="left:915.25px;top:748.15px;font-size:11px;line-height:14.3px;color:#8e8e8e;letter-spacing:0.3px">0.5</div>
<div class="tx" style="left:1007.5px;top:748.15px;font-size:11px;line-height:14.3px;color:#8e8e8e;letter-spacing:0.3px">0.6</div>
<svg class="a" style="left:615px;top:700px" width="65" height="50" viewBox="615 700 65 50"><rect x="626.8" y="716" width="1.8" height="23" fill="#5ee05e"/><path d="M627.7 709.5 L624.5 719 L631 719 Z" fill="#5ee05e"/><rect x="628" y="738.2" width="24" height="1.8" fill="#f05a5a"/><path d="M657 739 L648 735.8 L648 742.2 Z" fill="#f05a5a"/><circle cx="627.6" cy="739" r="2.6" fill="#3344ff"/></svg>
<div class="tx" style="left:481.5px;width:300px;text-align:center;top:693.35px;font-size:11px;line-height:14.3px;color:#5ee05e;">v</div>
<div class="tx" style="left:516.3px;width:300px;text-align:center;top:727.85px;font-size:11px;line-height:14.3px;color:#f06060;">u</div>
<div class="tx" style="left:630.5px;top:728.8px;font-size:8px;line-height:10.4px;color:#4a5aff;">w</div>
<svg class="a" style="left:110px;top:815px" width="50" height="45" viewBox="110 815 50 45"><rect x="121.5" y="827" width="1.8" height="23" fill="#5ee05e"/><path d="M122.4 820.5 L119.2 830 L125.6 830 Z" fill="#5ee05e"/><rect x="123" y="849" width="23" height="1.8" fill="#f05a5a"/><path d="M150 849.9 L141 846.7 L141 853.1 Z" fill="#f05a5a"/><circle cx="122.4" cy="849.9" r="2.6" fill="#3344ff"/></svg>
<div class="tx" style="left:-25px;width:300px;text-align:center;top:805.35px;font-size:11px;line-height:14.3px;color:#5ee05e;">y</div>
<div class="tx" style="left:9.599999999999994px;width:300px;text-align:center;top:838.85px;font-size:11px;line-height:14.3px;color:#f06060;">x</div>
<div class="tx" style="left:125px;top:836.8px;font-size:8px;line-height:10.4px;color:#4a5aff;">z</div>
<div class="a" style="left:540.2px;top:256.5px;width:14.6px;height:14.6px;background:#505050;"></div>
<div class="tx" style="left:397.5px;width:300px;text-align:center;top:256.98px;font-size:10.5px;line-height:13.65px;color:#1e1e1e;font-weight:bold;">T</div>
<div class="a" style="left:508.59999999999997px;top:272.5px;width:14.6px;height:14.6px;background:#505050;"></div>
<div class="tx" style="left:365.9px;width:300px;text-align:center;top:272.98px;font-size:10.5px;line-height:13.65px;color:#1e1e1e;font-weight:bold;">B</div>
<div class="a" style="left:524.2px;top:272.5px;width:14.6px;height:14.6px;background:#505050;"></div>
<div class="tx" style="left:381.5px;width:300px;text-align:center;top:272.98px;font-size:10.5px;line-height:13.65px;color:#1e1e1e;font-weight:bold;">L</div>
<div class="a" style="left:540.2px;top:272.5px;width:14.6px;height:14.6px;background:#505050;"></div>
<div class="tx" style="left:397.5px;width:300px;text-align:center;top:272.98px;font-size:10.5px;line-height:13.65px;color:#1e1e1e;font-weight:bold;">F</div>
<div class="a" style="left:556.2px;top:272.5px;width:14.6px;height:14.6px;background:#505050;"></div>
<div class="tx" style="left:413.5px;width:300px;text-align:center;top:272.98px;font-size:10.5px;line-height:13.65px;color:#1e1e1e;font-weight:bold;">R</div>
<div class="a" style="left:540.2px;top:288.3px;width:14.6px;height:14.6px;background:#505050;"></div>
<div class="tx" style="left:397.5px;width:300px;text-align:center;top:288.78px;font-size:10.5px;line-height:13.65px;color:#1e1e1e;font-weight:bold;">B</div>
<svg class="a" style="left:93px;top:241px" width="494" height="279" viewBox="93 241 494 279"><defs><pattern id="mesh3" width="4" height="4" patternUnits="userSpaceOnUse" patternTransform="rotate(35)"><rect width="4" height="4" fill="#6c706c"/><path d="M0 0 H4 M0 0 L4 4" stroke="#3c3f3c" stroke-width="0.7"/></pattern><pattern id="meshL" width="9" height="9" patternUnits="userSpaceOnUse" patternTransform="rotate(25)"><rect width="9" height="9" fill="#a6ada6"/><path d="M0 0 H9 M0 0 L9 9" stroke="#4a4d4a" stroke-width="0.8"/></pattern></defs><polygon points="257.8,329.1 267.9,320.3 285.5,310.3 308.2,301.5 328.3,298.2 356.0,297.7 393.7,302.2 426.5,311.5 437.8,320.3 436.5,330.4 426.5,334.2 386.2,343.0 351.0,344.8 313.2,345.5 280.5,345.5 270.4,343.0 259.1,336.7" fill="none" stroke="#f26a1b" stroke-width="1.1"/><polyline points="272.9,317.8 351.0,315.3 431.5,314.0" fill="none" stroke="#f26a1b" stroke-width="1"/><polyline points="308.2,301.5 305.1,311.5 309.4,324.1" fill="none" stroke="#f26a1b" stroke-width="1"/><polyline points="356.0,297.7 354.0,316.6" fill="none" stroke="#f26a1b" stroke-width="1"/><polyline points="391.2,302.7 396.3,316.6 401.3,315.3" fill="none" stroke="#f26a1b" stroke-width="1"/><polyline points="280.5,345.5 293.1,334.2 310.7,326.6 351.0,322.9 383.7,324.1 406.3,332.9 418.9,343.0" fill="none" stroke="#f26a1b" stroke-width="1"/><polyline points="357.2,323.4 356.0,343.0" fill="none" stroke="#f26a1b" stroke-width="1"/><path d="M353.4684117795117 316.56430908633274 Q391.22325698464635 287.6189277623962 484.35187515731184 290.63931537880694" fill="none" stroke="#4a4a4a" stroke-width="2"/><path d="M391.22325698464635 315.3058142461616 L481.83488547696953 314.04731940599044" fill="none" stroke="#4a4a4a" stroke-width="2"/><polygon points="485.6,282.6 538.5,300.2 537.2,311.5 517.1,324.1 471.8,310.3 480.6,293.9" fill="#4a4c4a" stroke="#f26a1b" stroke-width="1"/><circle cx="406.32519506670025" cy="335.94512962496856" r="20.135917442738485" fill="#3c3c3c"/><ellipse cx="408.84218474704255" cy="346.76818525044047" rx="10.571356657437704" ry="5.537377296753084" fill="#000" stroke="#f26a1b" stroke-width="0.8"/><polygon points="272.9,368.2 315.7,350.5 361.0,348.0 396.3,353.1 436.5,363.1 444.1,370.7 436.5,380.7 418.9,385.8 413.9,390.8 411.4,411.0 315.7,411.0 278.0,411.0 275.4,388.3" fill="url(#mesh3)" stroke="#f26a1b" stroke-width="1.2"/><polygon points="310.7,351.8 361.0,348.5 396.3,353.6 411.4,365.6 315.7,366.9" fill="#3a3c3a" stroke="#f26a1b" stroke-width="1"/><polyline points="361.0,348.5 362.3,366.9 358.5,411.0" fill="none" stroke="#f26a1b" stroke-width="1.2"/><polygon points="411.4,360.6 436.5,363.1 445.3,370.7 436.5,380.7 416.4,380.7" fill="#3a3a3a" stroke="#f26a1b" stroke-width="1"/><path d="M266.63226780770196 421.01938082053863 A25.169896803423107 26.428391643594264 0 0 1 318.2305562547194 421.01938082053863 Z" fill="url(#meshL)" stroke="#f26a1b" stroke-width="1.2"/><path d="M457.9234835137176 421.01938082053863 A25.169896803423107 26.428391643594264 0 0 1 510.78026680090613 421.01938082053863 Z" fill="url(#meshL)" stroke="#f26a1b" stroke-width="1.2"/><polygon points="255.3,378.2 266.6,375.7 270.4,411.0 260.3,418.5 255.3,403.4" fill="url(#meshL)" stroke="#555" stroke-width="0.8"/><circle cx="466.7329473949157" cy="388.2985149760886" r="7.04757110495847" fill="#3a3a3a"/><circle cx="449.1140196325195" cy="410.9514220991694" r="7.04757110495847" fill="#3a3a3a"/><circle cx="277.95872136924237" cy="384.52303045557517" r="7.04757110495847" fill="#3a3a3a"/><polygon points="242.7,421.0 542.2,418.5 542.2,426.1 517.1,431.1 242.7,433.6" fill="#3c3c3c" stroke="#f26a1b" stroke-width="1"/><polygon points="245.2,433.6 391.2,433.6 391.2,446.2 330.8,446.2 328.3,450.0 245.2,451.2" fill="url(#meshL)" stroke="#f26a1b" stroke-width="1"/><polygon points="310.7,433.6 431.5,433.6 431.5,437.4 310.7,437.4" fill="url(#mesh3)"/><polygon points="328.3,443.7 486.9,443.7 486.9,448.7 328.3,451.2" fill="#3a3a3a" stroke="#f26a1b" stroke-width="0.8"/><polygon points="431.5,433.6 476.8,431.1 474.3,443.7 431.5,443.7" fill="url(#mesh3)" stroke="#f26a1b" stroke-width="0.8"/><polygon points="408.8,433.6 421.4,433.6 418.9,461.3 416.4,471.4 376.1,471.4 373.6,461.3 408.8,456.3" fill="url(#mesh3)" stroke="#f26a1b" stroke-width="1"/><polygon points="461.7,433.6 474.3,433.6 471.8,466.3 469.2,472.6 429.0,472.6 431.5,461.3 459.2,456.3" fill="url(#mesh3)" stroke="#f26a1b" stroke-width="1"/><polygon points="217.6,403.4 232.7,399.6 245.2,404.7 247.8,413.5 240.2,421.0 225.1,431.1 217.6,413.5" fill="#3c3c3c" stroke="#f26a1b" stroke-width="1"/><polygon points="270.4,446.2 293.1,451.2 293.1,463.8 275.4,461.3" fill="#5a3a20" stroke="#f26a1b" stroke-width="1"/><path d="M542.242637805185 368.1625975333501 Q562.3785552479235 370.67958721369246 561.1200604077524 393.3324943367732 L554.8275862068965 390.8155046564309 Q552.3105965265543 375.71356657437707 542.242637805185 368.1625975333501Z" fill="#3c3c3c" stroke="#f26a1b" stroke-width="1"/><path d="M529.6576894034735 393.3324943367732 Q542.242637805185 395.8494840171155 539.7256481248427 407.1759375786559" fill="none" stroke="#3c3c3c" stroke-width="5"/><path d="M514.5557513214196 405.91744273848474 L519.5897306821042 410.9514220991694" stroke="#3c3c3c" stroke-width="5"/><path d="M507.00478228039265 438.6383085829348 L527.1406997231311 438.6383085829348 M494.4198338786811 448.70626730430405 L512.0387616410773 448.70626730430405" stroke="#3a3a3a" stroke-width="4"/><circle cx="534.6916687641581" cy="351.0470677070224" r="2" fill="#f26a1b"/><path d="M178 264 l6 6 m0 -6 l-6 6 M181 262 v10 M187 260 l6 6 m0 -6 l-6 6 M190 258 v10" stroke="#555" stroke-width="1.6"/><path d="M189 292 l6 6 m0 -6 l-6 6 M192 290 v10" stroke="#f26a1b" stroke-width="1.3"/></svg>
<svg class="a" style="left:260px;top:600px" width="140" height="60" viewBox="260 600 140 60"><path d="M273.8235294117647 637.6470588235294 Q277.5 630.2941176470588 303.2352941176471 627.3529411764706 L321.61764705882354 620.0 Q343.67647058823525 616.3235294117646 362.05882352941177 624.7794117647059 L382.27941176470586 628.4558823529412 L384.11764705882354 645.0 L369.4117647058823 649.4117647058823 Q360.2205882352941 635.8088235294117 349.19117647058823 648.6764705882352 L303.2352941176471 650.5147058823529 Q294.0441176470588 635.8088235294117 284.8529411764706 650.5147058823529 L273.8235294117647 649.4117647058823 Z" fill="#3c3c3c"/><path d="M306.9117647058823 628.4558823529412 L323.45588235294116 621.4705882352941 L362.05882352941177 625.1470588235294 L373.0882352941176 627.3529411764706" fill="none" stroke="#f26a1b" stroke-width="1" stroke-dasharray="8 3"/><path d="M275.6617647058823 639.4852941176471 L281.17647058823525 645.0" stroke="#f26a1b" stroke-width="1"/><path d="M303.2352941176471 639.4852941176471 H351.02941176470586 M306.9117647058823 644.2647058823529 H347.35294117647055" stroke="#777" stroke-width="1" stroke-dasharray="2 2"/></svg>
<svg class="a" style="left:598px;top:241px" width="497" height="279" viewBox="598 241 497 279"><defs><pattern id="meshU" width="4.5" height="4.5" patternUnits="userSpaceOnUse" patternTransform="rotate(30)"><rect width="4.5" height="4.5" fill="#8a918a"/><path d="M0 0 H4.5 M0 0 L4.5 4.5" stroke="#474b47" stroke-width="0.7"/></pattern><pattern id="meshUL" width="10" height="10" patternUnits="userSpaceOnUse" patternTransform="rotate(40)"><rect width="10" height="10" fill="#a3aaa3"/><path d="M0 0 H10 M0 0 V10" stroke="#50544f" stroke-width="0.8"/></pattern><pattern id="meshUD" width="3.5" height="3.5" patternUnits="userSpaceOnUse" patternTransform="rotate(20)"><rect width="3.5" height="3.5" fill="#676b67"/><path d="M0 0 H3.5 M0 0 V3.5" stroke="#383b38" stroke-width="0.8"/></pattern></defs><circle cx="1007.1428571428571" cy="285.23809523809524" r="25.0" fill="#2f2f2f"/><circle cx="1002.3809523809524" cy="290.0" r="13.095238095238095" fill="none" stroke="#3a3a3a" stroke-width="4"/><polygon points="807.1,271.0 812.4,261.0 828.6,251.9 857.1,242.4 892.9,238.8 1000.0,238.8 1047.6,254.3 1045.2,266.2 1028.6,278.1 976.2,297.1 916.7,297.1 833.3,299.0 823.8,296.7 809.5,287.6" fill="none" stroke="#f26a1b" stroke-width="1.3"/><polyline points="828.6,257.1 1042.9,251.4" fill="none" stroke="#f26a1b" stroke-width="1.1"/><polyline points="869.0,238.8 871.4,271.0" fill="none" stroke="#f26a1b" stroke-width="1.1"/><polyline points="971.4,269.0 990.5,238.8" fill="none" stroke="#f26a1b" stroke-width="1.1"/><polyline points="831.0,298.3 852.4,284.0 892.9,269.8 928.6,268.6 957.1,275.7 978.6,294.8" fill="none" stroke="#f26a1b" stroke-width="1.1"/><polyline points="927.4,269.0 925.0,291.2" fill="none" stroke="#f26a1b" stroke-width="1.1"/><polyline points="933.3,269.8 931.0,295.2" fill="none" stroke="#f26a1b" stroke-width="1.1"/><rect x="940.4761904761905" y="241" width="5.9523809523809526" height="9.523809523809524" fill="#3a3a3a"/><polygon points="828.6,325.7 878.6,302.4 947.6,297.6 988.1,300.0 1057.1,321.0 1047.6,335.2 1019.0,344.8 995.2,359.0 1007.1,394.8 1095.2,397.1 1095.2,373.3 1094.8,449.5 1054.8,462.6 952.4,462.6 988.1,430.5 902.4,433.3 850.0,438.1 792.9,435.2 790.5,406.7 778.6,411.9 754.8,373.3 790.5,368.6 807.1,342.4 819.0,335.2" fill="url(#meshU)" stroke="#f26a1b" stroke-width="1.2"/><polygon points="878.6,302.4 947.6,297.6 988.1,300.0 1019.0,321.0 878.6,323.3" fill="url(#meshU)" stroke="#f26a1b" stroke-width="1"/><polygon points="1019.0,321.0 1057.1,321.0 1047.6,335.2 1019.0,344.8" fill="url(#meshUD)" stroke="#f26a1b" stroke-width="1"/><polyline points="838.1,325.7 1019.0,321.0 1020.2,344.8" fill="none" stroke="#f26a1b" stroke-width="1.2"/><polyline points="947.6,298.3 952.4,330.5 945.2,382.9" fill="none" stroke="#f26a1b" stroke-width="1.2"/><path d="M826.1904761904761 401.9047619047619 A38.095238095238095 55.95238095238095 0 0 1 902.3809523809524 401.9047619047619 L902.3809523809524 432.8571428571429 L826.1904761904761 432.8571428571429 Z" fill="url(#meshUL)" stroke="#f26a1b" stroke-width="1.2"/><polygon points="804.8,342.4 819.0,335.2 828.6,344.8 826.2,406.7 802.4,401.9 807.1,373.3" fill="url(#meshUL)"/><polygon points="790.5,401.9 1095.2,397.1 1095.2,411.4 790.5,411.4" fill="url(#meshU)" stroke="#f26a1b" stroke-width="1.1"/><polyline points="902.4,411.4 1095.2,409.5" fill="none" stroke="#f26a1b" stroke-width="1.1"/><polygon points="883.3,416.2 988.1,416.2 988.1,423.3 883.3,423.3" fill="#4a4c4a" stroke="#f26a1b" stroke-width="0.8"/><polygon points="990.5,411.9 1095.2,411.9 1094.8,449.5 1054.8,462.6 952.4,462.6 988.1,430.5" fill="url(#meshUD)"/><polygon points="1031.0,421.0 1059.5,416.2 1054.8,442.4 1035.7,444.8" fill="url(#meshU)" opacity="0.6"/><polyline points="952.4,462.6 1054.8,462.6" fill="none" stroke="#f26a1b" stroke-width="1.2"/><ellipse cx="921.4285714285714" cy="303.0952380952381" rx="9.523809523809524" ry="10.714285714285714" fill="#3a3a3a"/><ellipse cx="992.8571428571429" cy="340.0" rx="7.142857142857142" ry="11.904761904761905" fill="#3a3a3a"/><ellipse cx="842.8571428571429" cy="354.2857142857143" rx="14.285714285714285" ry="11.904761904761905" fill="#3a3a3a"/><circle cx="1061.904761904762" cy="385.23809523809524" r="10.714285714285714" fill="#2f2f2f"/><circle cx="835.7142857142857" cy="437.6190476190476" r="9.523809523809524" fill="#5a4030" stroke="#f26a1b" stroke-width="1.5" stroke-dasharray="2 2"/><polygon points="754.8,374 770,368.6 790,373 792.6,384 775,394.6 760,392" fill="url(#meshUD)" stroke="#f26a1b" stroke-width="1"/><polygon points="780,390 795,400 790,410 778,405" fill="#3a3a3a"/></svg>
<svg class="a" style="left:790px;top:570px" width="140" height="55" viewBox="790 570 140 55"><path d="M804.6219931271478 598.5567010309278 Q808.0584192439862 591.6838487972509 835.5498281786942 589.2783505154639 L856.1683848797251 582.4054982817869 Q876.786941580756 579.6563573883161 897.405498281787 588.2474226804123 L909.4329896907216 591.6838487972509 L911.1512027491408 607.8350515463917 L897.405498281787 612.3024054982818 L835.5498281786942 614.020618556701 L814.9312714776632 611.2714776632303 L805.3092783505155 609.8969072164948 Z" fill="#2f2f2f"/><path d="M832.1134020618556 591.6838487972509 L849.2955326460481 584.1237113402062 M849.2955326460481 589.9656357388316 L880.2233676975945 589.2783505154639 M883.659793814433 583.0927835051547 L897.405498281787 589.2783505154639" fill="none" stroke="#f26a1b" stroke-width="1" stroke-dasharray="6 4"/><path d="M806.340206185567 600.274914089347 L809.7766323024055 608.8659793814433 M893.9690721649484 605.4295532646048 L894.6563573883161 607.8350515463917" stroke="#f26a1b" stroke-width="1"/><path d="M838.9862542955326 603.7113402061856 H883.659793814433" stroke="#777" stroke-width="1" stroke-dasharray="2 2"/></svg>
<div class="a" style="left:589.5px;top:222px;width:5.0px;height:656px;background:linear-gradient(rgba(138,63,18,0) 0%,rgba(120,55,18,0.45) 15%,rgba(130,60,18,0.6) 45%,rgba(120,55,18,0.45) 80%,rgba(110,50,16,0.3) 100%);"></div>
<svg class="a" style="left:15px;top:15px" width="165" height="115" viewBox="15 15 165 115"><polygon points="15,80.6 111.5,15 175,15 15,124" fill="#d8394f"/></svg>
<div class="tx" style="left:77px;top:61px;transform:translate(-50%,-50%) rotate(-34.2deg);font-family:'Liberation Serif',serif;font-weight:bold;font-size:17.5px;line-height:20px;color:#b4f0a8">www.aplboda.com</div>
<div class="a" style="left:1282px;top:930px;width:167px;height:27px;background:#d8394f"></div>
<div class="tx" style="left:1282px;top:930px;width:167px;height:27px;text-align:center;font-family:'Liberation Serif',serif;font-weight:bold;font-size:19px;line-height:27px;color:#b4f0a8">www.aplboda.com</div>
</div></div>
</body></html>
